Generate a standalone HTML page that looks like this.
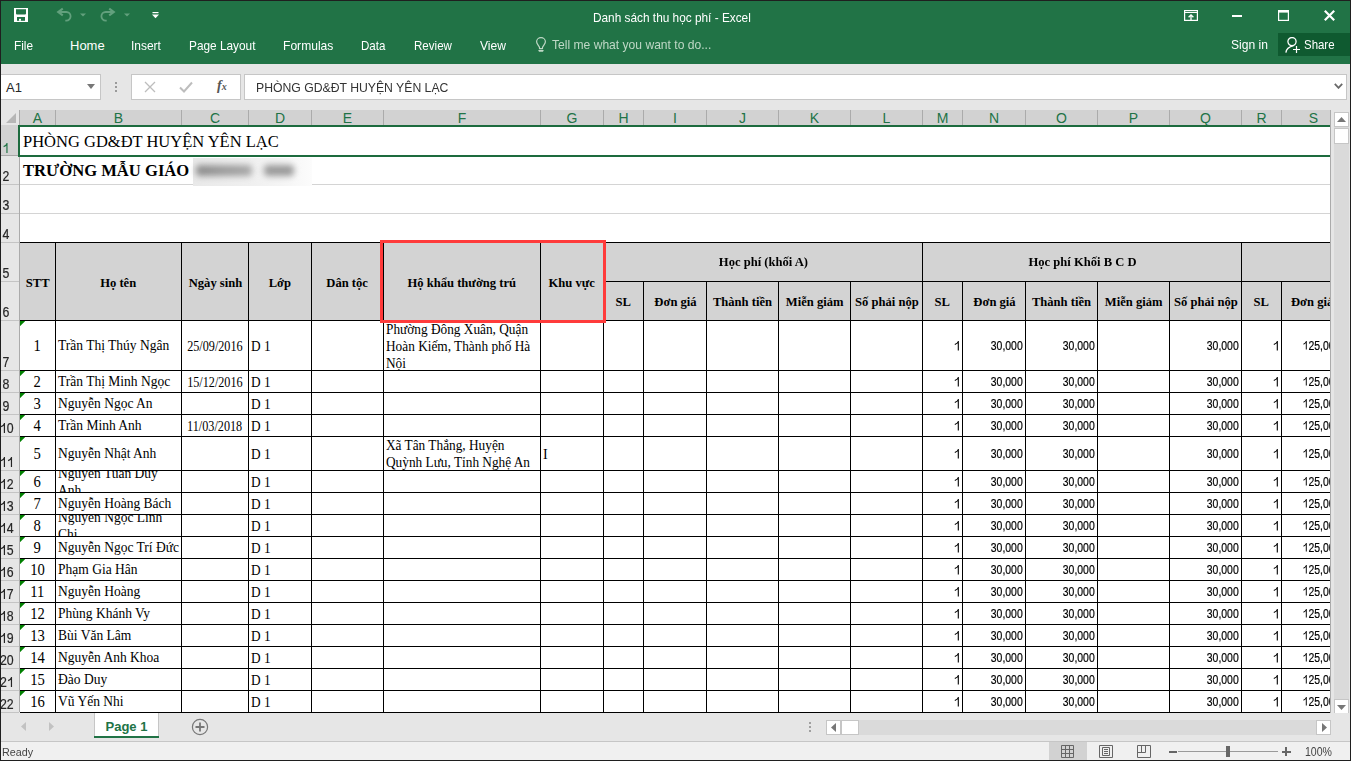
<!DOCTYPE html>
<html><head><meta charset="utf-8"><title>Excel</title><style>
html,body{margin:0;padding:0;width:1351px;height:761px;overflow:hidden;background:#e6e6e6}
#w{position:relative;width:1351px;height:761px;overflow:hidden}
#w>div,#w>svg{position:absolute}
.c{display:flex;box-sizing:border-box;white-space:nowrap;overflow:hidden}
.c span{display:block}
</style></head>
<body><div id="w">
<div style="left:0px;top:0px;width:1351px;height:761px;background:#e6e6e6"></div>
<div style="left:0px;top:0px;width:1351px;height:64px;background:#217346"></div>
<svg style="left:14px;top:8px" width="14" height="14" viewBox="0 0 14 14">
<path d="M0 0 H14 V14 H0 Z" fill="#fff"/>
<path d="M2 1.3 H12 V5.6 Q12 6.6 11 6.6 H3 Q2 6.6 2 5.6 Z" fill="#217346"/>
<rect x="3" y="9" width="8" height="3.8" fill="#217346"/>
<rect x="5" y="10.8" width="2" height="2" fill="#fff"/>
</svg>
<svg style="left:56px;top:7px" width="16" height="16" viewBox="0 0 16 16">
<path d="M6.8 1.6 L2.2 5 L6.8 8.4" fill="none" stroke="#62a07d" stroke-width="2.1" stroke-linejoin="miter"/>
<path d="M2.5 5 H10.3 A4.3 4.3 0 0 1 10.3 13.6 H9.3" fill="none" stroke="#62a07d" stroke-width="1.8"/>
</svg>
<svg style="left:80px;top:13px" width="6" height="4" viewBox="0 0 6 4"><path d="M0 0.5 H6 L3 3.5 Z" fill="#62a07d"/></svg>
<svg style="left:100px;top:7px" width="16" height="16" viewBox="0 0 16 16">
<path d="M9.2 1.6 L13.8 5 L9.2 8.4" fill="none" stroke="#62a07d" stroke-width="2.1" stroke-linejoin="miter"/>
<path d="M13.5 5 H5.7 A4.3 4.3 0 0 0 5.7 13.6 H6.7" fill="none" stroke="#62a07d" stroke-width="1.8"/>
</svg>
<svg style="left:124px;top:13px" width="6" height="4" viewBox="0 0 6 4"><path d="M0 0.5 H6 L3 3.5 Z" fill="#62a07d"/></svg>
<svg style="left:152px;top:12px" width="7" height="7" viewBox="0 0 7 7"><rect x="0.5" y="0" width="6" height="1.2" fill="#fff"/><path d="M0 2.6 H7 L3.5 6.2 Z" fill="#fff"/></svg>
<div style="left:593px;top:10px;font:13px 'Liberation Sans', sans-serif;color:#fff;white-space:nowrap;line-height:15px"><span style="display:inline-block;transform:scaleX(0.91);transform-origin:0 0">Danh sách thu học phí - Excel</span></div>
<svg style="left:1184px;top:10px" width="14" height="11" viewBox="0 0 14 11">
<rect x="0.6" y="0.6" width="12.8" height="9.8" fill="none" stroke="#fff" stroke-width="1.2"/>
<path d="M1 2.5 H13" stroke="#fff" stroke-width="1"/>
<path d="M7 10 V5 M4.6 7.2 L7 4.8 L9.4 7.2" fill="none" stroke="#fff" stroke-width="1.3"/>
</svg>
<div style="left:1232px;top:15px;width:10px;height:2px;background:#fff"></div>
<svg style="left:1278px;top:10px" width="11" height="11" viewBox="0 0 11 11">
<rect x="0.6" y="0.6" width="9.8" height="9.8" fill="none" stroke="#fff" stroke-width="1.2"/>
<rect x="0" y="1" width="11" height="1.6" fill="#fff"/>
</svg>
<svg style="left:1324px;top:10px" width="11" height="11" viewBox="0 0 11 11">
<path d="M0.8 0.8 L10.2 10.2 M10.2 0.8 L0.8 10.2" stroke="#fff" stroke-width="2.2"/>
</svg>
<div style="left:14px;top:38px;font:normal 13px 'Liberation Sans', sans-serif;color:#fff;white-space:nowrap;line-height:15px"><span style="display:inline-block;transform:scaleX(0.91);transform-origin:0 0">File</span></div>
<div style="left:70px;top:38px;font:normal 13px 'Liberation Sans', sans-serif;color:#fff;white-space:nowrap;line-height:15px"><span style="display:inline-block;transform:scaleX(1.0);transform-origin:0 0">Home</span></div>
<div style="left:131px;top:38px;font:normal 13px 'Liberation Sans', sans-serif;color:#fff;white-space:nowrap;line-height:15px"><span style="display:inline-block;transform:scaleX(0.92);transform-origin:0 0">Insert</span></div>
<div style="left:189px;top:38px;font:normal 13px 'Liberation Sans', sans-serif;color:#fff;white-space:nowrap;line-height:15px"><span style="display:inline-block;transform:scaleX(0.91);transform-origin:0 0">Page Layout</span></div>
<div style="left:283px;top:38px;font:normal 13px 'Liberation Sans', sans-serif;color:#fff;white-space:nowrap;line-height:15px"><span style="display:inline-block;transform:scaleX(0.93);transform-origin:0 0">Formulas</span></div>
<div style="left:361px;top:38px;font:normal 13px 'Liberation Sans', sans-serif;color:#fff;white-space:nowrap;line-height:15px"><span style="display:inline-block;transform:scaleX(0.89);transform-origin:0 0">Data</span></div>
<div style="left:414px;top:38px;font:normal 13px 'Liberation Sans', sans-serif;color:#fff;white-space:nowrap;line-height:15px"><span style="display:inline-block;transform:scaleX(0.89);transform-origin:0 0">Review</span></div>
<div style="left:480px;top:38px;font:normal 13px 'Liberation Sans', sans-serif;color:#fff;white-space:nowrap;line-height:15px"><span style="display:inline-block;transform:scaleX(0.93);transform-origin:0 0">View</span></div>
<svg style="left:535px;top:37px" width="12" height="16" viewBox="0 0 12 16">
<path d="M4.5 11.6 V10.6 C4.5 9 1.6 7.2 1.6 4.8 A4.4 4.1 0 0 1 10.4 4.8 C10.4 7.2 7.5 9 7.5 10.6 V11.6 Z" fill="none" stroke="#bfd8c6" stroke-width="1.2" stroke-linejoin="round"/>
<path d="M3.2 13 H8.8 L8 14.8 H4 Z" fill="#bfd8c6"/>
</svg>
<div style="left:552px;top:37px;font:normal 13px 'Liberation Sans', sans-serif;color:#bfd8c6;white-space:nowrap;line-height:15px"><span style="display:inline-block;transform:scaleX(0.93);transform-origin:0 0">Tell me what you want to do...</span></div>
<div style="left:1231px;top:37px;font:normal 13px 'Liberation Sans', sans-serif;color:#fff;white-space:nowrap;line-height:15px"><span style="display:inline-block;transform:scaleX(0.93);transform-origin:0 0">Sign in</span></div>
<div style="left:1278px;top:33px;width:72px;height:23px;background:#0f5a30"></div>
<svg style="left:1285px;top:37px" width="16" height="16" viewBox="0 0 16 16">
<circle cx="7" cy="4.6" r="4.1" fill="none" stroke="#fff" stroke-width="1.3"/>
<path d="M0.9 15.6 C1.2 11.6 4.2 9.6 8.6 8.6" fill="none" stroke="#fff" stroke-width="1.3"/>
<path d="M8 12.5 H15 M11.5 9 V16" stroke="#fff" stroke-width="1.2"/>
</svg>
<div style="left:1304px;top:37px;font:normal 13px 'Liberation Sans', sans-serif;color:#fff;white-space:nowrap;line-height:15px"><span style="display:inline-block;transform:scaleX(0.88);transform-origin:0 0">Share</span></div>
<div style="left:1px;top:74px;width:100px;height:26px;background:#fff;border:1px solid #c6c6c6;border-left:none;box-sizing:border-box"></div>
<div style="left:6px;top:80px;font:13px 'Liberation Sans', sans-serif;color:#262626;white-space:nowrap">A1</div>
<svg style="left:87px;top:84px" width="8" height="5" viewBox="0 0 8 5"><path d="M0 0 H8 L4 5 Z" fill="#777"/></svg>
<div style="left:115px;top:82px;width:2px;height:2px;background:#9a9a9a"></div>
<div style="left:115px;top:86px;width:2px;height:2px;background:#9a9a9a"></div>
<div style="left:115px;top:90px;width:2px;height:2px;background:#9a9a9a"></div>
<div style="left:131px;top:74px;width:110px;height:26px;background:#fff;border:1px solid #c6c6c6;box-sizing:border-box"></div>
<svg style="left:144px;top:81px" width="12" height="12" viewBox="0 0 12 12"><path d="M1 1 L11 11 M11 1 L1 11" stroke="#bdbdbd" stroke-width="1.3"/></svg>
<svg style="left:179px;top:81px" width="14" height="12" viewBox="0 0 14 12"><path d="M1 6.5 L5 10.5 L13 1.5" fill="none" stroke="#bdbdbd" stroke-width="2"/></svg>
<div style="left:217px;top:78px;font:bold 14px 'Liberation Serif', serif;color:#555;white-space:nowrap"><i>f</i><span style='font-size:10px;position:relative;top:0px'><i>x</i></span></div>
<div style="left:244px;top:74px;width:1103px;height:26px;background:#fff;border:1px solid #c6c6c6;box-sizing:border-box"></div>
<div style="left:256px;top:80px;font:normal 13px 'Liberation Sans', sans-serif;color:#333;white-space:nowrap;line-height:15px"><span style="display:inline-block;transform:scaleX(0.94);transform-origin:0 0">PHÒNG GD&amp;ĐT HUYỆN YÊN LẠC</span></div>
<svg style="left:1334px;top:83px" width="9" height="6" viewBox="0 0 9 6"><path d="M0.8 0.8 L4.5 4.8 L8.2 0.8" fill="none" stroke="#6a6a6a" stroke-width="1.8"/></svg>
<div style="left:20px;top:110px;width:1310px;height:15px;background:#d2d2d2"></div>
<svg style="left:6px;top:113px" width="10" height="10" viewBox="0 0 10 10"><path d="M10 0 V10 H0 Z" fill="#b6b6b6"/></svg>
<div style="left:19px;top:110px;width:1px;height:15px;background:#ababab"></div>
<div class="c" style="left:20px;top:110px;width:35px;height:15px;justify-content:center;align-items:center;padding:0 0px;font:14px 'Liberation Sans', sans-serif;color:#217346"><span style="transform:translateY(-0.5px) scaleX(1);transform-origin:50% 0">A</span></div>
<div style="left:55px;top:110px;width:1px;height:15px;background:#ababab"></div>
<div class="c" style="left:56px;top:110px;width:125px;height:15px;justify-content:center;align-items:center;padding:0 0px;font:14px 'Liberation Sans', sans-serif;color:#217346"><span style="transform:translateY(-0.5px) scaleX(1);transform-origin:50% 0">B</span></div>
<div style="left:181px;top:110px;width:1px;height:15px;background:#ababab"></div>
<div class="c" style="left:182px;top:110px;width:66px;height:15px;justify-content:center;align-items:center;padding:0 0px;font:14px 'Liberation Sans', sans-serif;color:#217346"><span style="transform:translateY(-0.5px) scaleX(1);transform-origin:50% 0">C</span></div>
<div style="left:248px;top:110px;width:1px;height:15px;background:#ababab"></div>
<div class="c" style="left:249px;top:110px;width:62px;height:15px;justify-content:center;align-items:center;padding:0 0px;font:14px 'Liberation Sans', sans-serif;color:#217346"><span style="transform:translateY(-0.5px) scaleX(1);transform-origin:50% 0">D</span></div>
<div style="left:311px;top:110px;width:1px;height:15px;background:#ababab"></div>
<div class="c" style="left:312px;top:110px;width:71px;height:15px;justify-content:center;align-items:center;padding:0 0px;font:14px 'Liberation Sans', sans-serif;color:#217346"><span style="transform:translateY(-0.5px) scaleX(1);transform-origin:50% 0">E</span></div>
<div style="left:383px;top:110px;width:1px;height:15px;background:#ababab"></div>
<div class="c" style="left:384px;top:110px;width:156px;height:15px;justify-content:center;align-items:center;padding:0 0px;font:14px 'Liberation Sans', sans-serif;color:#217346"><span style="transform:translateY(-0.5px) scaleX(1);transform-origin:50% 0">F</span></div>
<div style="left:540px;top:110px;width:1px;height:15px;background:#ababab"></div>
<div class="c" style="left:541px;top:110px;width:62px;height:15px;justify-content:center;align-items:center;padding:0 0px;font:14px 'Liberation Sans', sans-serif;color:#217346"><span style="transform:translateY(-0.5px) scaleX(1);transform-origin:50% 0">G</span></div>
<div style="left:603px;top:110px;width:1px;height:15px;background:#ababab"></div>
<div class="c" style="left:604px;top:110px;width:39px;height:15px;justify-content:center;align-items:center;padding:0 0px;font:14px 'Liberation Sans', sans-serif;color:#217346"><span style="transform:translateY(-0.5px) scaleX(1);transform-origin:50% 0">H</span></div>
<div style="left:643px;top:110px;width:1px;height:15px;background:#ababab"></div>
<div class="c" style="left:644px;top:110px;width:62px;height:15px;justify-content:center;align-items:center;padding:0 0px;font:14px 'Liberation Sans', sans-serif;color:#217346"><span style="transform:translateY(-0.5px) scaleX(1);transform-origin:50% 0">I</span></div>
<div style="left:706px;top:110px;width:1px;height:15px;background:#ababab"></div>
<div class="c" style="left:707px;top:110px;width:71px;height:15px;justify-content:center;align-items:center;padding:0 0px;font:14px 'Liberation Sans', sans-serif;color:#217346"><span style="transform:translateY(-0.5px) scaleX(1);transform-origin:50% 0">J</span></div>
<div style="left:778px;top:110px;width:1px;height:15px;background:#ababab"></div>
<div class="c" style="left:779px;top:110px;width:71px;height:15px;justify-content:center;align-items:center;padding:0 0px;font:14px 'Liberation Sans', sans-serif;color:#217346"><span style="transform:translateY(-0.5px) scaleX(1);transform-origin:50% 0">K</span></div>
<div style="left:850px;top:110px;width:1px;height:15px;background:#ababab"></div>
<div class="c" style="left:851px;top:110px;width:71px;height:15px;justify-content:center;align-items:center;padding:0 0px;font:14px 'Liberation Sans', sans-serif;color:#217346"><span style="transform:translateY(-0.5px) scaleX(1);transform-origin:50% 0">L</span></div>
<div style="left:922px;top:110px;width:1px;height:15px;background:#ababab"></div>
<div class="c" style="left:923px;top:110px;width:39px;height:15px;justify-content:center;align-items:center;padding:0 0px;font:14px 'Liberation Sans', sans-serif;color:#217346"><span style="transform:translateY(-0.5px) scaleX(1);transform-origin:50% 0">M</span></div>
<div style="left:962px;top:110px;width:1px;height:15px;background:#ababab"></div>
<div class="c" style="left:963px;top:110px;width:62px;height:15px;justify-content:center;align-items:center;padding:0 0px;font:14px 'Liberation Sans', sans-serif;color:#217346"><span style="transform:translateY(-0.5px) scaleX(1);transform-origin:50% 0">N</span></div>
<div style="left:1025px;top:110px;width:1px;height:15px;background:#ababab"></div>
<div class="c" style="left:1026px;top:110px;width:71px;height:15px;justify-content:center;align-items:center;padding:0 0px;font:14px 'Liberation Sans', sans-serif;color:#217346"><span style="transform:translateY(-0.5px) scaleX(1);transform-origin:50% 0">O</span></div>
<div style="left:1097px;top:110px;width:1px;height:15px;background:#ababab"></div>
<div class="c" style="left:1098px;top:110px;width:71px;height:15px;justify-content:center;align-items:center;padding:0 0px;font:14px 'Liberation Sans', sans-serif;color:#217346"><span style="transform:translateY(-0.5px) scaleX(1);transform-origin:50% 0">P</span></div>
<div style="left:1169px;top:110px;width:1px;height:15px;background:#ababab"></div>
<div class="c" style="left:1170px;top:110px;width:71px;height:15px;justify-content:center;align-items:center;padding:0 0px;font:14px 'Liberation Sans', sans-serif;color:#217346"><span style="transform:translateY(-0.5px) scaleX(1);transform-origin:50% 0">Q</span></div>
<div style="left:1241px;top:110px;width:1px;height:15px;background:#ababab"></div>
<div class="c" style="left:1242px;top:110px;width:39px;height:15px;justify-content:center;align-items:center;padding:0 0px;font:14px 'Liberation Sans', sans-serif;color:#217346"><span style="transform:translateY(-0.5px) scaleX(1);transform-origin:50% 0">R</span></div>
<div style="left:1281px;top:110px;width:1px;height:15px;background:#ababab"></div>
<div class="c" style="left:1282px;top:110px;width:48px;height:15px;overflow:hidden;font:14px 'Liberation Sans', sans-serif;color:#217346"><div class="c" style="position:absolute;left:0;top:0;width:63px;height:15px;justify-content:center;align-items:center"><span style="transform:translateY(-0.5px)">S</span></div></div>
<div style="left:1px;top:125px;width:18px;height:587px;background:#e6e6e6"></div>
<div style="left:1px;top:125px;width:18px;height:31px;background:#d2d2d2"></div>
<div style="left:19px;top:125px;width:1px;height:587px;background:#ababab"></div>
<div style="left:1px;top:155px;width:18px;height:1px;background:#a8a8a8"></div>
<div class="c" style="left:-13.7px;top:126px;width:40px;height:30px;align-items:flex-end;justify-content:center;padding:0;font:14px 'Liberation Sans', sans-serif;color:#217346;-webkit-text-stroke:0.2px #217346;clip-path:inset(0 7.3px 0 14.7px)"><span style="transform:scaleX(0.88);transform-origin:50% 0"><svg width="7.8" height="10" viewBox="0 0 7.8 10" style="vertical-align:baseline;display:inline-block"><path d="M5.1 0 V10 M5.1 0.7 Q4.2 2.6 1.3 3.7" fill="none" stroke="#217346" stroke-width="1.35"/></svg></span></div>
<div style="left:1px;top:184px;width:18px;height:1px;background:#c4c4c4"></div>
<div class="c" style="left:-13.7px;top:157px;width:40px;height:27px;align-items:flex-end;justify-content:center;padding:0;font:14px 'Liberation Sans', sans-serif;color:#262626;-webkit-text-stroke:0.2px #262626;clip-path:inset(0 7.3px 0 14.7px)"><span style="transform:scaleX(0.88);transform-origin:50% 0">2</span></div>
<div style="left:1px;top:213px;width:18px;height:1px;background:#c4c4c4"></div>
<div class="c" style="left:-13.7px;top:185px;width:40px;height:28px;align-items:flex-end;justify-content:center;padding:0;font:14px 'Liberation Sans', sans-serif;color:#262626;-webkit-text-stroke:0.2px #262626;clip-path:inset(0 7.3px 0 14.7px)"><span style="transform:scaleX(0.88);transform-origin:50% 0">3</span></div>
<div style="left:1px;top:242px;width:18px;height:1px;background:#c4c4c4"></div>
<div class="c" style="left:-13.7px;top:214px;width:40px;height:28px;align-items:flex-end;justify-content:center;padding:0;font:14px 'Liberation Sans', sans-serif;color:#262626;-webkit-text-stroke:0.2px #262626;clip-path:inset(0 7.3px 0 14.7px)"><span style="transform:scaleX(0.88);transform-origin:50% 0">4</span></div>
<div style="left:1px;top:281px;width:18px;height:1px;background:#c4c4c4"></div>
<div class="c" style="left:-13.7px;top:243px;width:40px;height:38px;align-items:flex-end;justify-content:center;padding:0;font:14px 'Liberation Sans', sans-serif;color:#262626;-webkit-text-stroke:0.2px #262626;clip-path:inset(0 7.3px 0 14.7px)"><span style="transform:scaleX(0.88);transform-origin:50% 0">5</span></div>
<div style="left:1px;top:320px;width:18px;height:1px;background:#c4c4c4"></div>
<div class="c" style="left:-13.7px;top:282px;width:40px;height:38px;align-items:flex-end;justify-content:center;padding:0;font:14px 'Liberation Sans', sans-serif;color:#262626;-webkit-text-stroke:0.2px #262626;clip-path:inset(0 7.3px 0 14.7px)"><span style="transform:scaleX(0.88);transform-origin:50% 0">6</span></div>
<div style="left:1px;top:370px;width:18px;height:1px;background:#c4c4c4"></div>
<div class="c" style="left:-13.7px;top:321px;width:40px;height:49px;align-items:flex-end;justify-content:center;padding:0;font:14px 'Liberation Sans', sans-serif;color:#262626;-webkit-text-stroke:0.2px #262626;clip-path:inset(0 7.3px 0 14.7px)"><span style="transform:scaleX(0.88);transform-origin:50% 0">7</span></div>
<div style="left:1px;top:392px;width:18px;height:1px;background:#c4c4c4"></div>
<div class="c" style="left:-13.7px;top:371px;width:40px;height:21px;align-items:flex-end;justify-content:center;padding:0;font:14px 'Liberation Sans', sans-serif;color:#262626;-webkit-text-stroke:0.2px #262626;clip-path:inset(0 7.3px 0 14.7px)"><span style="transform:scaleX(0.88);transform-origin:50% 0">8</span></div>
<div style="left:1px;top:414px;width:18px;height:1px;background:#c4c4c4"></div>
<div class="c" style="left:-13.7px;top:393px;width:40px;height:21px;align-items:flex-end;justify-content:center;padding:0;font:14px 'Liberation Sans', sans-serif;color:#262626;-webkit-text-stroke:0.2px #262626;clip-path:inset(0 7.3px 0 14.7px)"><span style="transform:scaleX(0.88);transform-origin:50% 0">9</span></div>
<div style="left:1px;top:436px;width:18px;height:1px;background:#c4c4c4"></div>
<div class="c" style="left:-13.7px;top:415px;width:40px;height:21px;align-items:flex-end;justify-content:center;padding:0;font:14px 'Liberation Sans', sans-serif;color:#262626;-webkit-text-stroke:0.2px #262626;clip-path:inset(0 7.3px 0 14.7px)"><span style="transform:scaleX(0.88);transform-origin:50% 0"><svg width="7.8" height="10" viewBox="0 0 7.8 10" style="vertical-align:baseline;display:inline-block"><path d="M5.1 0 V10 M5.1 0.7 Q4.2 2.6 1.3 3.7" fill="none" stroke="#262626" stroke-width="1.35"/></svg>0</span></div>
<div style="left:1px;top:470px;width:18px;height:1px;background:#c4c4c4"></div>
<div class="c" style="left:-13.7px;top:437px;width:40px;height:33px;align-items:flex-end;justify-content:center;padding:0;font:14px 'Liberation Sans', sans-serif;color:#262626;-webkit-text-stroke:0.2px #262626;clip-path:inset(0 7.3px 0 14.7px)"><span style="transform:scaleX(0.88);transform-origin:50% 0"><svg width="7.8" height="10" viewBox="0 0 7.8 10" style="vertical-align:baseline;display:inline-block"><path d="M5.1 0 V10 M5.1 0.7 Q4.2 2.6 1.3 3.7" fill="none" stroke="#262626" stroke-width="1.35"/></svg><svg width="7.8" height="10" viewBox="0 0 7.8 10" style="vertical-align:baseline;display:inline-block"><path d="M5.1 0 V10 M5.1 0.7 Q4.2 2.6 1.3 3.7" fill="none" stroke="#262626" stroke-width="1.35"/></svg></span></div>
<div style="left:1px;top:492px;width:18px;height:1px;background:#c4c4c4"></div>
<div class="c" style="left:-13.7px;top:471px;width:40px;height:21px;align-items:flex-end;justify-content:center;padding:0;font:14px 'Liberation Sans', sans-serif;color:#262626;-webkit-text-stroke:0.2px #262626;clip-path:inset(0 7.3px 0 14.7px)"><span style="transform:scaleX(0.88);transform-origin:50% 0"><svg width="7.8" height="10" viewBox="0 0 7.8 10" style="vertical-align:baseline;display:inline-block"><path d="M5.1 0 V10 M5.1 0.7 Q4.2 2.6 1.3 3.7" fill="none" stroke="#262626" stroke-width="1.35"/></svg>2</span></div>
<div style="left:1px;top:514px;width:18px;height:1px;background:#c4c4c4"></div>
<div class="c" style="left:-13.7px;top:493px;width:40px;height:21px;align-items:flex-end;justify-content:center;padding:0;font:14px 'Liberation Sans', sans-serif;color:#262626;-webkit-text-stroke:0.2px #262626;clip-path:inset(0 7.3px 0 14.7px)"><span style="transform:scaleX(0.88);transform-origin:50% 0"><svg width="7.8" height="10" viewBox="0 0 7.8 10" style="vertical-align:baseline;display:inline-block"><path d="M5.1 0 V10 M5.1 0.7 Q4.2 2.6 1.3 3.7" fill="none" stroke="#262626" stroke-width="1.35"/></svg>3</span></div>
<div style="left:1px;top:536px;width:18px;height:1px;background:#c4c4c4"></div>
<div class="c" style="left:-13.7px;top:515px;width:40px;height:21px;align-items:flex-end;justify-content:center;padding:0;font:14px 'Liberation Sans', sans-serif;color:#262626;-webkit-text-stroke:0.2px #262626;clip-path:inset(0 7.3px 0 14.7px)"><span style="transform:scaleX(0.88);transform-origin:50% 0"><svg width="7.8" height="10" viewBox="0 0 7.8 10" style="vertical-align:baseline;display:inline-block"><path d="M5.1 0 V10 M5.1 0.7 Q4.2 2.6 1.3 3.7" fill="none" stroke="#262626" stroke-width="1.35"/></svg>4</span></div>
<div style="left:1px;top:558px;width:18px;height:1px;background:#c4c4c4"></div>
<div class="c" style="left:-13.7px;top:537px;width:40px;height:21px;align-items:flex-end;justify-content:center;padding:0;font:14px 'Liberation Sans', sans-serif;color:#262626;-webkit-text-stroke:0.2px #262626;clip-path:inset(0 7.3px 0 14.7px)"><span style="transform:scaleX(0.88);transform-origin:50% 0"><svg width="7.8" height="10" viewBox="0 0 7.8 10" style="vertical-align:baseline;display:inline-block"><path d="M5.1 0 V10 M5.1 0.7 Q4.2 2.6 1.3 3.7" fill="none" stroke="#262626" stroke-width="1.35"/></svg>5</span></div>
<div style="left:1px;top:580px;width:18px;height:1px;background:#c4c4c4"></div>
<div class="c" style="left:-13.7px;top:559px;width:40px;height:21px;align-items:flex-end;justify-content:center;padding:0;font:14px 'Liberation Sans', sans-serif;color:#262626;-webkit-text-stroke:0.2px #262626;clip-path:inset(0 7.3px 0 14.7px)"><span style="transform:scaleX(0.88);transform-origin:50% 0"><svg width="7.8" height="10" viewBox="0 0 7.8 10" style="vertical-align:baseline;display:inline-block"><path d="M5.1 0 V10 M5.1 0.7 Q4.2 2.6 1.3 3.7" fill="none" stroke="#262626" stroke-width="1.35"/></svg>6</span></div>
<div style="left:1px;top:602px;width:18px;height:1px;background:#c4c4c4"></div>
<div class="c" style="left:-13.7px;top:581px;width:40px;height:21px;align-items:flex-end;justify-content:center;padding:0;font:14px 'Liberation Sans', sans-serif;color:#262626;-webkit-text-stroke:0.2px #262626;clip-path:inset(0 7.3px 0 14.7px)"><span style="transform:scaleX(0.88);transform-origin:50% 0"><svg width="7.8" height="10" viewBox="0 0 7.8 10" style="vertical-align:baseline;display:inline-block"><path d="M5.1 0 V10 M5.1 0.7 Q4.2 2.6 1.3 3.7" fill="none" stroke="#262626" stroke-width="1.35"/></svg>7</span></div>
<div style="left:1px;top:624px;width:18px;height:1px;background:#c4c4c4"></div>
<div class="c" style="left:-13.7px;top:603px;width:40px;height:21px;align-items:flex-end;justify-content:center;padding:0;font:14px 'Liberation Sans', sans-serif;color:#262626;-webkit-text-stroke:0.2px #262626;clip-path:inset(0 7.3px 0 14.7px)"><span style="transform:scaleX(0.88);transform-origin:50% 0"><svg width="7.8" height="10" viewBox="0 0 7.8 10" style="vertical-align:baseline;display:inline-block"><path d="M5.1 0 V10 M5.1 0.7 Q4.2 2.6 1.3 3.7" fill="none" stroke="#262626" stroke-width="1.35"/></svg>8</span></div>
<div style="left:1px;top:646px;width:18px;height:1px;background:#c4c4c4"></div>
<div class="c" style="left:-13.7px;top:625px;width:40px;height:21px;align-items:flex-end;justify-content:center;padding:0;font:14px 'Liberation Sans', sans-serif;color:#262626;-webkit-text-stroke:0.2px #262626;clip-path:inset(0 7.3px 0 14.7px)"><span style="transform:scaleX(0.88);transform-origin:50% 0"><svg width="7.8" height="10" viewBox="0 0 7.8 10" style="vertical-align:baseline;display:inline-block"><path d="M5.1 0 V10 M5.1 0.7 Q4.2 2.6 1.3 3.7" fill="none" stroke="#262626" stroke-width="1.35"/></svg>9</span></div>
<div style="left:1px;top:668px;width:18px;height:1px;background:#c4c4c4"></div>
<div class="c" style="left:-13.7px;top:647px;width:40px;height:21px;align-items:flex-end;justify-content:center;padding:0;font:14px 'Liberation Sans', sans-serif;color:#262626;-webkit-text-stroke:0.2px #262626;clip-path:inset(0 7.3px 0 14.7px)"><span style="transform:scaleX(0.88);transform-origin:50% 0">20</span></div>
<div style="left:1px;top:690px;width:18px;height:1px;background:#c4c4c4"></div>
<div class="c" style="left:-13.7px;top:669px;width:40px;height:21px;align-items:flex-end;justify-content:center;padding:0;font:14px 'Liberation Sans', sans-serif;color:#262626;-webkit-text-stroke:0.2px #262626;clip-path:inset(0 7.3px 0 14.7px)"><span style="transform:scaleX(0.88);transform-origin:50% 0">2<svg width="7.8" height="10" viewBox="0 0 7.8 10" style="vertical-align:baseline;display:inline-block"><path d="M5.1 0 V10 M5.1 0.7 Q4.2 2.6 1.3 3.7" fill="none" stroke="#262626" stroke-width="1.35"/></svg></span></div>
<div style="left:1px;top:712px;width:18px;height:1px;background:#c4c4c4"></div>
<div class="c" style="left:-13.7px;top:691px;width:40px;height:21px;align-items:flex-end;justify-content:center;padding:0;font:14px 'Liberation Sans', sans-serif;color:#262626;-webkit-text-stroke:0.2px #262626;clip-path:inset(0 7.3px 0 14.7px)"><span style="transform:scaleX(0.88);transform-origin:50% 0">22</span></div>
<div style="left:20px;top:125px;width:1310px;height:587px;background:#fff"></div>
<div style="left:20px;top:184px;width:1310px;height:1px;background:#d4d4d4"></div>
<div style="left:20px;top:213px;width:1310px;height:1px;background:#d4d4d4"></div>
<div style="left:20px;top:242px;width:1310px;height:78px;background:#d3d3d3"></div>
<div style="left:20px;top:242px;width:1310px;height:1px;background:#000"></div>
<div style="left:603px;top:281px;width:727px;height:1px;background:#000"></div>
<div style="left:20px;top:320px;width:1310px;height:1px;background:#000"></div>
<div style="left:20px;top:370px;width:1310px;height:1px;background:#000"></div>
<div style="left:20px;top:392px;width:1310px;height:1px;background:#000"></div>
<div style="left:20px;top:414px;width:1310px;height:1px;background:#000"></div>
<div style="left:20px;top:436px;width:1310px;height:1px;background:#000"></div>
<div style="left:20px;top:470px;width:1310px;height:1px;background:#000"></div>
<div style="left:20px;top:492px;width:1310px;height:1px;background:#000"></div>
<div style="left:20px;top:514px;width:1310px;height:1px;background:#000"></div>
<div style="left:20px;top:536px;width:1310px;height:1px;background:#000"></div>
<div style="left:20px;top:558px;width:1310px;height:1px;background:#000"></div>
<div style="left:20px;top:580px;width:1310px;height:1px;background:#000"></div>
<div style="left:20px;top:602px;width:1310px;height:1px;background:#000"></div>
<div style="left:20px;top:624px;width:1310px;height:1px;background:#000"></div>
<div style="left:20px;top:646px;width:1310px;height:1px;background:#000"></div>
<div style="left:20px;top:668px;width:1310px;height:1px;background:#000"></div>
<div style="left:20px;top:690px;width:1310px;height:1px;background:#000"></div>
<div style="left:20px;top:712px;width:1310px;height:1px;background:#000"></div>
<div style="left:55px;top:242px;width:1px;height:470px;background:#000"></div>
<div style="left:181px;top:242px;width:1px;height:470px;background:#000"></div>
<div style="left:248px;top:242px;width:1px;height:470px;background:#000"></div>
<div style="left:311px;top:242px;width:1px;height:470px;background:#000"></div>
<div style="left:383px;top:242px;width:1px;height:470px;background:#000"></div>
<div style="left:540px;top:242px;width:1px;height:470px;background:#000"></div>
<div style="left:603px;top:242px;width:1px;height:470px;background:#000"></div>
<div style="left:643px;top:281px;width:1px;height:431px;background:#000"></div>
<div style="left:706px;top:281px;width:1px;height:431px;background:#000"></div>
<div style="left:778px;top:281px;width:1px;height:431px;background:#000"></div>
<div style="left:850px;top:281px;width:1px;height:431px;background:#000"></div>
<div style="left:922px;top:242px;width:1px;height:470px;background:#000"></div>
<div style="left:962px;top:281px;width:1px;height:431px;background:#000"></div>
<div style="left:1025px;top:281px;width:1px;height:431px;background:#000"></div>
<div style="left:1097px;top:281px;width:1px;height:431px;background:#000"></div>
<div style="left:1169px;top:281px;width:1px;height:431px;background:#000"></div>
<div style="left:1241px;top:242px;width:1px;height:470px;background:#000"></div>
<div style="left:1281px;top:281px;width:1px;height:431px;background:#000"></div>
<div class="c" style="left:20px;top:243px;width:35px;height:77px;justify-content:center;align-items:center;padding:0 0px;font:bold 13.4px 'Liberation Serif', serif;color:#000"><span style="transform:translateY(1px) scaleX(0.94);transform-origin:50% 0">STT</span></div>
<div class="c" style="left:56px;top:243px;width:125px;height:77px;justify-content:center;align-items:center;padding:0 0px;font:bold 13.4px 'Liberation Serif', serif;color:#000"><span style="transform:translateY(1px) scaleX(0.94);transform-origin:50% 0">Họ tên</span></div>
<div class="c" style="left:182px;top:243px;width:66px;height:77px;justify-content:center;align-items:center;padding:0 0px;font:bold 13.4px 'Liberation Serif', serif;color:#000"><span style="transform:translateY(1px) scaleX(0.94);transform-origin:50% 0">Ngày sinh</span></div>
<div class="c" style="left:249px;top:243px;width:62px;height:77px;justify-content:center;align-items:center;padding:0 0px;font:bold 13.4px 'Liberation Serif', serif;color:#000"><span style="transform:translateY(1px) scaleX(0.94);transform-origin:50% 0">Lớp</span></div>
<div class="c" style="left:312px;top:243px;width:71px;height:77px;justify-content:center;align-items:center;padding:0 0px;font:bold 13.4px 'Liberation Serif', serif;color:#000"><span style="transform:translateY(1px) scaleX(0.94);transform-origin:50% 0">Dân tộc</span></div>
<div class="c" style="left:384px;top:243px;width:156px;height:77px;justify-content:center;align-items:center;padding:0 0px;font:bold 13.4px 'Liberation Serif', serif;color:#000"><span style="transform:translateY(1px) scaleX(0.94);transform-origin:50% 0">Hộ khẩu thường trú</span></div>
<div class="c" style="left:541px;top:243px;width:62px;height:77px;justify-content:center;align-items:center;padding:0 0px;font:bold 13.4px 'Liberation Serif', serif;color:#000"><span style="transform:translateY(1px) scaleX(0.94);transform-origin:50% 0">Khu vực</span></div>
<div class="c" style="left:604px;top:243px;width:318px;height:38px;justify-content:center;align-items:center;padding:0 0px;font:bold 13.4px 'Liberation Serif', serif;color:#000"><span style="transform:translateY(0px) scaleX(0.94);transform-origin:50% 0">Học phí (khối A)</span></div>
<div class="c" style="left:923px;top:243px;width:318px;height:38px;justify-content:center;align-items:center;padding:0 0px;font:bold 13.4px 'Liberation Serif', serif;color:#000"><span style="transform:translateY(0px) scaleX(0.94);transform-origin:50% 0">Học phí Khối B C D</span></div>
<div class="c" style="left:604px;top:282px;width:39px;height:38px;justify-content:center;align-items:center;padding:0 0px;font:bold 13.4px 'Liberation Serif', serif;color:#000"><span style="transform:translateY(1px) scaleX(0.94);transform-origin:50% 0">SL</span></div>
<div class="c" style="left:644px;top:282px;width:62px;height:38px;justify-content:center;align-items:center;padding:0 0px;font:bold 13.4px 'Liberation Serif', serif;color:#000"><span style="transform:translateY(1px) scaleX(0.94);transform-origin:50% 0">Đơn giá</span></div>
<div class="c" style="left:707px;top:282px;width:71px;height:38px;justify-content:center;align-items:center;padding:0 0px;font:bold 13.4px 'Liberation Serif', serif;color:#000"><span style="transform:translateY(1px) scaleX(0.94);transform-origin:50% 0">Thành tiền</span></div>
<div class="c" style="left:779px;top:282px;width:71px;height:38px;justify-content:center;align-items:center;padding:0 0px;font:bold 13.4px 'Liberation Serif', serif;color:#000"><span style="transform:translateY(1px) scaleX(0.94);transform-origin:50% 0">Miễn giảm</span></div>
<div class="c" style="left:851px;top:282px;width:71px;height:38px;justify-content:center;align-items:center;padding:0 0px;font:bold 13.4px 'Liberation Serif', serif;color:#000"><span style="transform:translateY(1px) scaleX(0.94);transform-origin:50% 0">Số phải nộp</span></div>
<div class="c" style="left:923px;top:282px;width:39px;height:38px;justify-content:center;align-items:center;padding:0 0px;font:bold 13.4px 'Liberation Serif', serif;color:#000"><span style="transform:translateY(1px) scaleX(0.94);transform-origin:50% 0">SL</span></div>
<div class="c" style="left:963px;top:282px;width:62px;height:38px;justify-content:center;align-items:center;padding:0 0px;font:bold 13.4px 'Liberation Serif', serif;color:#000"><span style="transform:translateY(1px) scaleX(0.94);transform-origin:50% 0">Đơn giá</span></div>
<div class="c" style="left:1026px;top:282px;width:71px;height:38px;justify-content:center;align-items:center;padding:0 0px;font:bold 13.4px 'Liberation Serif', serif;color:#000"><span style="transform:translateY(1px) scaleX(0.94);transform-origin:50% 0">Thành tiền</span></div>
<div class="c" style="left:1098px;top:282px;width:71px;height:38px;justify-content:center;align-items:center;padding:0 0px;font:bold 13.4px 'Liberation Serif', serif;color:#000"><span style="transform:translateY(1px) scaleX(0.94);transform-origin:50% 0">Miễn giảm</span></div>
<div class="c" style="left:1170px;top:282px;width:71px;height:38px;justify-content:center;align-items:center;padding:0 0px;font:bold 13.4px 'Liberation Serif', serif;color:#000"><span style="transform:translateY(1px) scaleX(0.94);transform-origin:50% 0">Số phải nộp</span></div>
<div class="c" style="left:1242px;top:282px;width:39px;height:38px;justify-content:center;align-items:center;padding:0 0px;font:bold 13.4px 'Liberation Serif', serif;color:#000"><span style="transform:translateY(1px) scaleX(0.94);transform-origin:50% 0">SL</span></div>
<div class="c" style="left:1282px;top:282px;width:48px;height:38px;justify-content:flex-start;align-items:center;padding-left:9px;font:bold 13.4px 'Liberation Serif', serif;color:#000"><span style="transform:translateY(1px) scaleX(0.94);transform-origin:0 0">Đơn giá</span></div>
<div style="left:23px;top:132px;font:16.5px 'Liberation Serif', serif;color:#000;white-space:nowrap">PHÒNG GD&amp;ĐT HUYỆN YÊN LẠC</div>
<div style="left:23px;top:161px;font:bold 16.6px 'Liberation Serif', serif;color:#000;white-space:nowrap">TRƯỜNG MẪU GIÁO</div>
<div style="left:193px;top:158px;width:119px;height:28px;background:linear-gradient(90deg,#e9e9e9 0%,#efefef 45%,#f5f5f5 75%,#fcfcfc 100%)"></div>
<div style="left:196px;top:165px;width:56px;height:11px;background:linear-gradient(90deg,#8c8c8c,#9c9c9c 50%,#a8a8a8);border-radius:4px;filter:blur(3.2px)"></div>
<div style="left:264px;top:165px;width:30px;height:11px;background:#9a9a9a;border-radius:4px;filter:blur(3.2px)"></div>
<svg style="left:20px;top:321px" width="5" height="5" viewBox="0 0 5 5"><path d="M0 0 H5.2 L0 5.2 Z" fill="#008000"/></svg>
<div class="c" style="left:20px;top:321px;width:35px;height:49px;justify-content:center;align-items:center;padding:0 0px;font:17px 'Liberation Serif', serif;color:#000"><span style="transform:translateY(0.3px) scaleX(0.86);transform-origin:50% 0">1</span></div>
<div class="c" style="left:56px;top:321px;width:125px;height:49px;justify-content:flex-start;align-items:center;padding:0 2px;font:14px 'Liberation Serif', serif;color:#000;line-height:16.8px;overflow:hidden"><span style="transform:translateY(1px) scaleX(0.965);transform-origin:0 0">Trần Thị Thúy Ngân</span></div>
<div class="c" style="left:182px;top:321px;width:66px;height:49px;justify-content:center;align-items:center;padding:0 0px;font:14px 'Liberation Serif', serif;color:#000"><span style="transform:translateY(1px) scaleX(0.87);transform-origin:50% 0">25/09/2016</span></div>
<div class="c" style="left:249px;top:321px;width:62px;height:49px;justify-content:flex-start;align-items:center;padding:0 2px;font:14px 'Liberation Serif', serif;color:#000"><span style="transform:translateY(1px) scaleX(0.95);transform-origin:0 0">D 1</span></div>
<svg style="left:954px;top:340.5px" width="6" height="10" viewBox="0 0 6 10"><path d="M4.3 0 V9.6 M4.3 0.6 Q3.6 2.4 0.8 3.6" fill="none" stroke="#000" stroke-width="1.1"/></svg>
<div class="c" style="left:963px;top:321px;width:62px;height:49px;justify-content:flex-end;align-items:center;padding:0 2px;font:12px 'Liberation Sans', sans-serif;color:#000;-webkit-text-stroke:0.2px #000"><span style="transform:translateY(0px) scaleX(0.87);transform-origin:100% 0">30,000</span></div>
<div class="c" style="left:1026px;top:321px;width:71px;height:49px;justify-content:flex-end;align-items:center;padding:0 2px;font:12px 'Liberation Sans', sans-serif;color:#000;-webkit-text-stroke:0.2px #000"><span style="transform:translateY(0px) scaleX(0.87);transform-origin:100% 0">30,000</span></div>
<div class="c" style="left:1170px;top:321px;width:71px;height:49px;justify-content:flex-end;align-items:center;padding:0 2px;font:12px 'Liberation Sans', sans-serif;color:#000;-webkit-text-stroke:0.2px #000"><span style="transform:translateY(0px) scaleX(0.87);transform-origin:100% 0">30,000</span></div>
<svg style="left:1273px;top:340.5px" width="6" height="10" viewBox="0 0 6 10"><path d="M4.3 0 V9.6 M4.3 0.6 Q3.6 2.4 0.8 3.6" fill="none" stroke="#000" stroke-width="1.1"/></svg>
<div class="c" style="left:1282px;top:321px;width:48px;height:49px;overflow:hidden;font:12px 'Liberation Sans', sans-serif;color:#000;-webkit-text-stroke:0.2px #000"><div class="c" style="position:absolute;left:0;top:0;width:60px;height:49px;justify-content:flex-end;align-items:center;padding-right:2px"><span style="transform:scaleX(0.87);transform-origin:100% 0"><svg width="6.67" height="8.6" viewBox="0 0 6.67 8.6" style="vertical-align:baseline;display:inline-block"><path d="M4.2 0 V8.6 M4.2 0.6 Q3.5 2.2 1 3.2" fill="none" stroke="#000" stroke-width="1.1"/></svg>25,000</span></div></div>
<svg style="left:20px;top:371px" width="5" height="5" viewBox="0 0 5 5"><path d="M0 0 H5.2 L0 5.2 Z" fill="#008000"/></svg>
<div class="c" style="left:20px;top:371px;width:35px;height:21px;justify-content:center;align-items:center;padding:0 0px;font:17px 'Liberation Serif', serif;color:#000"><span style="transform:translateY(0.3px) scaleX(0.86);transform-origin:50% 0">2</span></div>
<div class="c" style="left:56px;top:371px;width:125px;height:21px;justify-content:flex-start;align-items:center;padding:0 2px;font:14px 'Liberation Serif', serif;color:#000;line-height:16.8px;overflow:hidden"><span style="transform:translateY(1px) scaleX(0.965);transform-origin:0 0">Trần Thị Minh Ngọc</span></div>
<div class="c" style="left:182px;top:371px;width:66px;height:21px;justify-content:center;align-items:center;padding:0 0px;font:14px 'Liberation Serif', serif;color:#000"><span style="transform:translateY(1px) scaleX(0.87);transform-origin:50% 0">15/12/2016</span></div>
<div class="c" style="left:249px;top:371px;width:62px;height:21px;justify-content:flex-start;align-items:center;padding:0 2px;font:14px 'Liberation Serif', serif;color:#000"><span style="transform:translateY(1px) scaleX(0.95);transform-origin:0 0">D 1</span></div>
<svg style="left:954px;top:376.5px" width="6" height="10" viewBox="0 0 6 10"><path d="M4.3 0 V9.6 M4.3 0.6 Q3.6 2.4 0.8 3.6" fill="none" stroke="#000" stroke-width="1.1"/></svg>
<div class="c" style="left:963px;top:371px;width:62px;height:21px;justify-content:flex-end;align-items:center;padding:0 2px;font:12px 'Liberation Sans', sans-serif;color:#000;-webkit-text-stroke:0.2px #000"><span style="transform:translateY(0px) scaleX(0.87);transform-origin:100% 0">30,000</span></div>
<div class="c" style="left:1026px;top:371px;width:71px;height:21px;justify-content:flex-end;align-items:center;padding:0 2px;font:12px 'Liberation Sans', sans-serif;color:#000;-webkit-text-stroke:0.2px #000"><span style="transform:translateY(0px) scaleX(0.87);transform-origin:100% 0">30,000</span></div>
<div class="c" style="left:1170px;top:371px;width:71px;height:21px;justify-content:flex-end;align-items:center;padding:0 2px;font:12px 'Liberation Sans', sans-serif;color:#000;-webkit-text-stroke:0.2px #000"><span style="transform:translateY(0px) scaleX(0.87);transform-origin:100% 0">30,000</span></div>
<svg style="left:1273px;top:376.5px" width="6" height="10" viewBox="0 0 6 10"><path d="M4.3 0 V9.6 M4.3 0.6 Q3.6 2.4 0.8 3.6" fill="none" stroke="#000" stroke-width="1.1"/></svg>
<div class="c" style="left:1282px;top:371px;width:48px;height:21px;overflow:hidden;font:12px 'Liberation Sans', sans-serif;color:#000;-webkit-text-stroke:0.2px #000"><div class="c" style="position:absolute;left:0;top:0;width:60px;height:21px;justify-content:flex-end;align-items:center;padding-right:2px"><span style="transform:scaleX(0.87);transform-origin:100% 0"><svg width="6.67" height="8.6" viewBox="0 0 6.67 8.6" style="vertical-align:baseline;display:inline-block"><path d="M4.2 0 V8.6 M4.2 0.6 Q3.5 2.2 1 3.2" fill="none" stroke="#000" stroke-width="1.1"/></svg>25,000</span></div></div>
<svg style="left:20px;top:393px" width="5" height="5" viewBox="0 0 5 5"><path d="M0 0 H5.2 L0 5.2 Z" fill="#008000"/></svg>
<div class="c" style="left:20px;top:393px;width:35px;height:21px;justify-content:center;align-items:center;padding:0 0px;font:17px 'Liberation Serif', serif;color:#000"><span style="transform:translateY(0.3px) scaleX(0.86);transform-origin:50% 0">3</span></div>
<div class="c" style="left:56px;top:393px;width:125px;height:21px;justify-content:flex-start;align-items:center;padding:0 2px;font:14px 'Liberation Serif', serif;color:#000;line-height:16.8px;overflow:hidden"><span style="transform:translateY(1px) scaleX(0.965);transform-origin:0 0">Nguyễn Ngọc An</span></div>
<div class="c" style="left:249px;top:393px;width:62px;height:21px;justify-content:flex-start;align-items:center;padding:0 2px;font:14px 'Liberation Serif', serif;color:#000"><span style="transform:translateY(1px) scaleX(0.95);transform-origin:0 0">D 1</span></div>
<svg style="left:954px;top:398.5px" width="6" height="10" viewBox="0 0 6 10"><path d="M4.3 0 V9.6 M4.3 0.6 Q3.6 2.4 0.8 3.6" fill="none" stroke="#000" stroke-width="1.1"/></svg>
<div class="c" style="left:963px;top:393px;width:62px;height:21px;justify-content:flex-end;align-items:center;padding:0 2px;font:12px 'Liberation Sans', sans-serif;color:#000;-webkit-text-stroke:0.2px #000"><span style="transform:translateY(0px) scaleX(0.87);transform-origin:100% 0">30,000</span></div>
<div class="c" style="left:1026px;top:393px;width:71px;height:21px;justify-content:flex-end;align-items:center;padding:0 2px;font:12px 'Liberation Sans', sans-serif;color:#000;-webkit-text-stroke:0.2px #000"><span style="transform:translateY(0px) scaleX(0.87);transform-origin:100% 0">30,000</span></div>
<div class="c" style="left:1170px;top:393px;width:71px;height:21px;justify-content:flex-end;align-items:center;padding:0 2px;font:12px 'Liberation Sans', sans-serif;color:#000;-webkit-text-stroke:0.2px #000"><span style="transform:translateY(0px) scaleX(0.87);transform-origin:100% 0">30,000</span></div>
<svg style="left:1273px;top:398.5px" width="6" height="10" viewBox="0 0 6 10"><path d="M4.3 0 V9.6 M4.3 0.6 Q3.6 2.4 0.8 3.6" fill="none" stroke="#000" stroke-width="1.1"/></svg>
<div class="c" style="left:1282px;top:393px;width:48px;height:21px;overflow:hidden;font:12px 'Liberation Sans', sans-serif;color:#000;-webkit-text-stroke:0.2px #000"><div class="c" style="position:absolute;left:0;top:0;width:60px;height:21px;justify-content:flex-end;align-items:center;padding-right:2px"><span style="transform:scaleX(0.87);transform-origin:100% 0"><svg width="6.67" height="8.6" viewBox="0 0 6.67 8.6" style="vertical-align:baseline;display:inline-block"><path d="M4.2 0 V8.6 M4.2 0.6 Q3.5 2.2 1 3.2" fill="none" stroke="#000" stroke-width="1.1"/></svg>25,000</span></div></div>
<svg style="left:20px;top:415px" width="5" height="5" viewBox="0 0 5 5"><path d="M0 0 H5.2 L0 5.2 Z" fill="#008000"/></svg>
<div class="c" style="left:20px;top:415px;width:35px;height:21px;justify-content:center;align-items:center;padding:0 0px;font:17px 'Liberation Serif', serif;color:#000"><span style="transform:translateY(0.3px) scaleX(0.86);transform-origin:50% 0">4</span></div>
<div class="c" style="left:56px;top:415px;width:125px;height:21px;justify-content:flex-start;align-items:center;padding:0 2px;font:14px 'Liberation Serif', serif;color:#000;line-height:16.8px;overflow:hidden"><span style="transform:translateY(1px) scaleX(0.965);transform-origin:0 0">Trần Minh Anh</span></div>
<div class="c" style="left:182px;top:415px;width:66px;height:21px;justify-content:center;align-items:center;padding:0 0px;font:14px 'Liberation Serif', serif;color:#000"><span style="transform:translateY(1px) scaleX(0.87);transform-origin:50% 0">11/03/2018</span></div>
<div class="c" style="left:249px;top:415px;width:62px;height:21px;justify-content:flex-start;align-items:center;padding:0 2px;font:14px 'Liberation Serif', serif;color:#000"><span style="transform:translateY(1px) scaleX(0.95);transform-origin:0 0">D 1</span></div>
<svg style="left:954px;top:420.5px" width="6" height="10" viewBox="0 0 6 10"><path d="M4.3 0 V9.6 M4.3 0.6 Q3.6 2.4 0.8 3.6" fill="none" stroke="#000" stroke-width="1.1"/></svg>
<div class="c" style="left:963px;top:415px;width:62px;height:21px;justify-content:flex-end;align-items:center;padding:0 2px;font:12px 'Liberation Sans', sans-serif;color:#000;-webkit-text-stroke:0.2px #000"><span style="transform:translateY(0px) scaleX(0.87);transform-origin:100% 0">30,000</span></div>
<div class="c" style="left:1026px;top:415px;width:71px;height:21px;justify-content:flex-end;align-items:center;padding:0 2px;font:12px 'Liberation Sans', sans-serif;color:#000;-webkit-text-stroke:0.2px #000"><span style="transform:translateY(0px) scaleX(0.87);transform-origin:100% 0">30,000</span></div>
<div class="c" style="left:1170px;top:415px;width:71px;height:21px;justify-content:flex-end;align-items:center;padding:0 2px;font:12px 'Liberation Sans', sans-serif;color:#000;-webkit-text-stroke:0.2px #000"><span style="transform:translateY(0px) scaleX(0.87);transform-origin:100% 0">30,000</span></div>
<svg style="left:1273px;top:420.5px" width="6" height="10" viewBox="0 0 6 10"><path d="M4.3 0 V9.6 M4.3 0.6 Q3.6 2.4 0.8 3.6" fill="none" stroke="#000" stroke-width="1.1"/></svg>
<div class="c" style="left:1282px;top:415px;width:48px;height:21px;overflow:hidden;font:12px 'Liberation Sans', sans-serif;color:#000;-webkit-text-stroke:0.2px #000"><div class="c" style="position:absolute;left:0;top:0;width:60px;height:21px;justify-content:flex-end;align-items:center;padding-right:2px"><span style="transform:scaleX(0.87);transform-origin:100% 0"><svg width="6.67" height="8.6" viewBox="0 0 6.67 8.6" style="vertical-align:baseline;display:inline-block"><path d="M4.2 0 V8.6 M4.2 0.6 Q3.5 2.2 1 3.2" fill="none" stroke="#000" stroke-width="1.1"/></svg>25,000</span></div></div>
<svg style="left:20px;top:437px" width="5" height="5" viewBox="0 0 5 5"><path d="M0 0 H5.2 L0 5.2 Z" fill="#008000"/></svg>
<div class="c" style="left:20px;top:437px;width:35px;height:33px;justify-content:center;align-items:center;padding:0 0px;font:17px 'Liberation Serif', serif;color:#000"><span style="transform:translateY(0.3px) scaleX(0.86);transform-origin:50% 0">5</span></div>
<div class="c" style="left:56px;top:437px;width:125px;height:33px;justify-content:flex-start;align-items:center;padding:0 2px;font:14px 'Liberation Serif', serif;color:#000;line-height:16.8px;overflow:hidden"><span style="transform:translateY(1px) scaleX(0.965);transform-origin:0 0">Nguyễn Nhật Anh</span></div>
<div class="c" style="left:249px;top:437px;width:62px;height:33px;justify-content:flex-start;align-items:center;padding:0 2px;font:14px 'Liberation Serif', serif;color:#000"><span style="transform:translateY(1px) scaleX(0.95);transform-origin:0 0">D 1</span></div>
<svg style="left:954px;top:448.5px" width="6" height="10" viewBox="0 0 6 10"><path d="M4.3 0 V9.6 M4.3 0.6 Q3.6 2.4 0.8 3.6" fill="none" stroke="#000" stroke-width="1.1"/></svg>
<div class="c" style="left:963px;top:437px;width:62px;height:33px;justify-content:flex-end;align-items:center;padding:0 2px;font:12px 'Liberation Sans', sans-serif;color:#000;-webkit-text-stroke:0.2px #000"><span style="transform:translateY(0px) scaleX(0.87);transform-origin:100% 0">30,000</span></div>
<div class="c" style="left:1026px;top:437px;width:71px;height:33px;justify-content:flex-end;align-items:center;padding:0 2px;font:12px 'Liberation Sans', sans-serif;color:#000;-webkit-text-stroke:0.2px #000"><span style="transform:translateY(0px) scaleX(0.87);transform-origin:100% 0">30,000</span></div>
<div class="c" style="left:1170px;top:437px;width:71px;height:33px;justify-content:flex-end;align-items:center;padding:0 2px;font:12px 'Liberation Sans', sans-serif;color:#000;-webkit-text-stroke:0.2px #000"><span style="transform:translateY(0px) scaleX(0.87);transform-origin:100% 0">30,000</span></div>
<svg style="left:1273px;top:448.5px" width="6" height="10" viewBox="0 0 6 10"><path d="M4.3 0 V9.6 M4.3 0.6 Q3.6 2.4 0.8 3.6" fill="none" stroke="#000" stroke-width="1.1"/></svg>
<div class="c" style="left:1282px;top:437px;width:48px;height:33px;overflow:hidden;font:12px 'Liberation Sans', sans-serif;color:#000;-webkit-text-stroke:0.2px #000"><div class="c" style="position:absolute;left:0;top:0;width:60px;height:33px;justify-content:flex-end;align-items:center;padding-right:2px"><span style="transform:scaleX(0.87);transform-origin:100% 0"><svg width="6.67" height="8.6" viewBox="0 0 6.67 8.6" style="vertical-align:baseline;display:inline-block"><path d="M4.2 0 V8.6 M4.2 0.6 Q3.5 2.2 1 3.2" fill="none" stroke="#000" stroke-width="1.1"/></svg>25,000</span></div></div>
<svg style="left:20px;top:471px" width="5" height="5" viewBox="0 0 5 5"><path d="M0 0 H5.2 L0 5.2 Z" fill="#008000"/></svg>
<div class="c" style="left:20px;top:471px;width:35px;height:21px;justify-content:center;align-items:center;padding:0 0px;font:17px 'Liberation Serif', serif;color:#000"><span style="transform:translateY(0.3px) scaleX(0.86);transform-origin:50% 0">6</span></div>
<div class="c" style="left:56px;top:471px;width:125px;height:21px;justify-content:flex-start;align-items:center;padding:0 2px;font:14px 'Liberation Serif', serif;color:#000;line-height:16.8px;overflow:hidden"><span style="transform:translateY(1px) scaleX(0.965);transform-origin:0 0">Nguyễn Tuấn Duy<br>Anh</span></div>
<div class="c" style="left:249px;top:471px;width:62px;height:21px;justify-content:flex-start;align-items:center;padding:0 2px;font:14px 'Liberation Serif', serif;color:#000"><span style="transform:translateY(1px) scaleX(0.95);transform-origin:0 0">D 1</span></div>
<svg style="left:954px;top:476.5px" width="6" height="10" viewBox="0 0 6 10"><path d="M4.3 0 V9.6 M4.3 0.6 Q3.6 2.4 0.8 3.6" fill="none" stroke="#000" stroke-width="1.1"/></svg>
<div class="c" style="left:963px;top:471px;width:62px;height:21px;justify-content:flex-end;align-items:center;padding:0 2px;font:12px 'Liberation Sans', sans-serif;color:#000;-webkit-text-stroke:0.2px #000"><span style="transform:translateY(0px) scaleX(0.87);transform-origin:100% 0">30,000</span></div>
<div class="c" style="left:1026px;top:471px;width:71px;height:21px;justify-content:flex-end;align-items:center;padding:0 2px;font:12px 'Liberation Sans', sans-serif;color:#000;-webkit-text-stroke:0.2px #000"><span style="transform:translateY(0px) scaleX(0.87);transform-origin:100% 0">30,000</span></div>
<div class="c" style="left:1170px;top:471px;width:71px;height:21px;justify-content:flex-end;align-items:center;padding:0 2px;font:12px 'Liberation Sans', sans-serif;color:#000;-webkit-text-stroke:0.2px #000"><span style="transform:translateY(0px) scaleX(0.87);transform-origin:100% 0">30,000</span></div>
<svg style="left:1273px;top:476.5px" width="6" height="10" viewBox="0 0 6 10"><path d="M4.3 0 V9.6 M4.3 0.6 Q3.6 2.4 0.8 3.6" fill="none" stroke="#000" stroke-width="1.1"/></svg>
<div class="c" style="left:1282px;top:471px;width:48px;height:21px;overflow:hidden;font:12px 'Liberation Sans', sans-serif;color:#000;-webkit-text-stroke:0.2px #000"><div class="c" style="position:absolute;left:0;top:0;width:60px;height:21px;justify-content:flex-end;align-items:center;padding-right:2px"><span style="transform:scaleX(0.87);transform-origin:100% 0"><svg width="6.67" height="8.6" viewBox="0 0 6.67 8.6" style="vertical-align:baseline;display:inline-block"><path d="M4.2 0 V8.6 M4.2 0.6 Q3.5 2.2 1 3.2" fill="none" stroke="#000" stroke-width="1.1"/></svg>25,000</span></div></div>
<svg style="left:20px;top:493px" width="5" height="5" viewBox="0 0 5 5"><path d="M0 0 H5.2 L0 5.2 Z" fill="#008000"/></svg>
<div class="c" style="left:20px;top:493px;width:35px;height:21px;justify-content:center;align-items:center;padding:0 0px;font:17px 'Liberation Serif', serif;color:#000"><span style="transform:translateY(0.3px) scaleX(0.86);transform-origin:50% 0">7</span></div>
<div class="c" style="left:56px;top:493px;width:125px;height:21px;justify-content:flex-start;align-items:center;padding:0 2px;font:14px 'Liberation Serif', serif;color:#000;line-height:16.8px;overflow:hidden"><span style="transform:translateY(1px) scaleX(0.965);transform-origin:0 0">Nguyễn Hoàng Bách</span></div>
<div class="c" style="left:249px;top:493px;width:62px;height:21px;justify-content:flex-start;align-items:center;padding:0 2px;font:14px 'Liberation Serif', serif;color:#000"><span style="transform:translateY(1px) scaleX(0.95);transform-origin:0 0">D 1</span></div>
<svg style="left:954px;top:498.5px" width="6" height="10" viewBox="0 0 6 10"><path d="M4.3 0 V9.6 M4.3 0.6 Q3.6 2.4 0.8 3.6" fill="none" stroke="#000" stroke-width="1.1"/></svg>
<div class="c" style="left:963px;top:493px;width:62px;height:21px;justify-content:flex-end;align-items:center;padding:0 2px;font:12px 'Liberation Sans', sans-serif;color:#000;-webkit-text-stroke:0.2px #000"><span style="transform:translateY(0px) scaleX(0.87);transform-origin:100% 0">30,000</span></div>
<div class="c" style="left:1026px;top:493px;width:71px;height:21px;justify-content:flex-end;align-items:center;padding:0 2px;font:12px 'Liberation Sans', sans-serif;color:#000;-webkit-text-stroke:0.2px #000"><span style="transform:translateY(0px) scaleX(0.87);transform-origin:100% 0">30,000</span></div>
<div class="c" style="left:1170px;top:493px;width:71px;height:21px;justify-content:flex-end;align-items:center;padding:0 2px;font:12px 'Liberation Sans', sans-serif;color:#000;-webkit-text-stroke:0.2px #000"><span style="transform:translateY(0px) scaleX(0.87);transform-origin:100% 0">30,000</span></div>
<svg style="left:1273px;top:498.5px" width="6" height="10" viewBox="0 0 6 10"><path d="M4.3 0 V9.6 M4.3 0.6 Q3.6 2.4 0.8 3.6" fill="none" stroke="#000" stroke-width="1.1"/></svg>
<div class="c" style="left:1282px;top:493px;width:48px;height:21px;overflow:hidden;font:12px 'Liberation Sans', sans-serif;color:#000;-webkit-text-stroke:0.2px #000"><div class="c" style="position:absolute;left:0;top:0;width:60px;height:21px;justify-content:flex-end;align-items:center;padding-right:2px"><span style="transform:scaleX(0.87);transform-origin:100% 0"><svg width="6.67" height="8.6" viewBox="0 0 6.67 8.6" style="vertical-align:baseline;display:inline-block"><path d="M4.2 0 V8.6 M4.2 0.6 Q3.5 2.2 1 3.2" fill="none" stroke="#000" stroke-width="1.1"/></svg>25,000</span></div></div>
<svg style="left:20px;top:515px" width="5" height="5" viewBox="0 0 5 5"><path d="M0 0 H5.2 L0 5.2 Z" fill="#008000"/></svg>
<div class="c" style="left:20px;top:515px;width:35px;height:21px;justify-content:center;align-items:center;padding:0 0px;font:17px 'Liberation Serif', serif;color:#000"><span style="transform:translateY(0.3px) scaleX(0.86);transform-origin:50% 0">8</span></div>
<div class="c" style="left:56px;top:515px;width:125px;height:21px;justify-content:flex-start;align-items:center;padding:0 2px;font:14px 'Liberation Serif', serif;color:#000;line-height:16.8px;overflow:hidden"><span style="transform:translateY(1px) scaleX(0.965);transform-origin:0 0">Nguyễn Ngọc Linh<br>Chi</span></div>
<div class="c" style="left:249px;top:515px;width:62px;height:21px;justify-content:flex-start;align-items:center;padding:0 2px;font:14px 'Liberation Serif', serif;color:#000"><span style="transform:translateY(1px) scaleX(0.95);transform-origin:0 0">D 1</span></div>
<svg style="left:954px;top:520.5px" width="6" height="10" viewBox="0 0 6 10"><path d="M4.3 0 V9.6 M4.3 0.6 Q3.6 2.4 0.8 3.6" fill="none" stroke="#000" stroke-width="1.1"/></svg>
<div class="c" style="left:963px;top:515px;width:62px;height:21px;justify-content:flex-end;align-items:center;padding:0 2px;font:12px 'Liberation Sans', sans-serif;color:#000;-webkit-text-stroke:0.2px #000"><span style="transform:translateY(0px) scaleX(0.87);transform-origin:100% 0">30,000</span></div>
<div class="c" style="left:1026px;top:515px;width:71px;height:21px;justify-content:flex-end;align-items:center;padding:0 2px;font:12px 'Liberation Sans', sans-serif;color:#000;-webkit-text-stroke:0.2px #000"><span style="transform:translateY(0px) scaleX(0.87);transform-origin:100% 0">30,000</span></div>
<div class="c" style="left:1170px;top:515px;width:71px;height:21px;justify-content:flex-end;align-items:center;padding:0 2px;font:12px 'Liberation Sans', sans-serif;color:#000;-webkit-text-stroke:0.2px #000"><span style="transform:translateY(0px) scaleX(0.87);transform-origin:100% 0">30,000</span></div>
<svg style="left:1273px;top:520.5px" width="6" height="10" viewBox="0 0 6 10"><path d="M4.3 0 V9.6 M4.3 0.6 Q3.6 2.4 0.8 3.6" fill="none" stroke="#000" stroke-width="1.1"/></svg>
<div class="c" style="left:1282px;top:515px;width:48px;height:21px;overflow:hidden;font:12px 'Liberation Sans', sans-serif;color:#000;-webkit-text-stroke:0.2px #000"><div class="c" style="position:absolute;left:0;top:0;width:60px;height:21px;justify-content:flex-end;align-items:center;padding-right:2px"><span style="transform:scaleX(0.87);transform-origin:100% 0"><svg width="6.67" height="8.6" viewBox="0 0 6.67 8.6" style="vertical-align:baseline;display:inline-block"><path d="M4.2 0 V8.6 M4.2 0.6 Q3.5 2.2 1 3.2" fill="none" stroke="#000" stroke-width="1.1"/></svg>25,000</span></div></div>
<svg style="left:20px;top:537px" width="5" height="5" viewBox="0 0 5 5"><path d="M0 0 H5.2 L0 5.2 Z" fill="#008000"/></svg>
<div class="c" style="left:20px;top:537px;width:35px;height:21px;justify-content:center;align-items:center;padding:0 0px;font:17px 'Liberation Serif', serif;color:#000"><span style="transform:translateY(0.3px) scaleX(0.86);transform-origin:50% 0">9</span></div>
<div class="c" style="left:56px;top:537px;width:125px;height:21px;justify-content:flex-start;align-items:center;padding:0 2px;font:14px 'Liberation Serif', serif;color:#000;line-height:16.8px;overflow:hidden"><span style="transform:translateY(1px) scaleX(0.965);transform-origin:0 0">Nguyễn Ngọc Trí Đức</span></div>
<div class="c" style="left:249px;top:537px;width:62px;height:21px;justify-content:flex-start;align-items:center;padding:0 2px;font:14px 'Liberation Serif', serif;color:#000"><span style="transform:translateY(1px) scaleX(0.95);transform-origin:0 0">D 1</span></div>
<svg style="left:954px;top:542.5px" width="6" height="10" viewBox="0 0 6 10"><path d="M4.3 0 V9.6 M4.3 0.6 Q3.6 2.4 0.8 3.6" fill="none" stroke="#000" stroke-width="1.1"/></svg>
<div class="c" style="left:963px;top:537px;width:62px;height:21px;justify-content:flex-end;align-items:center;padding:0 2px;font:12px 'Liberation Sans', sans-serif;color:#000;-webkit-text-stroke:0.2px #000"><span style="transform:translateY(0px) scaleX(0.87);transform-origin:100% 0">30,000</span></div>
<div class="c" style="left:1026px;top:537px;width:71px;height:21px;justify-content:flex-end;align-items:center;padding:0 2px;font:12px 'Liberation Sans', sans-serif;color:#000;-webkit-text-stroke:0.2px #000"><span style="transform:translateY(0px) scaleX(0.87);transform-origin:100% 0">30,000</span></div>
<div class="c" style="left:1170px;top:537px;width:71px;height:21px;justify-content:flex-end;align-items:center;padding:0 2px;font:12px 'Liberation Sans', sans-serif;color:#000;-webkit-text-stroke:0.2px #000"><span style="transform:translateY(0px) scaleX(0.87);transform-origin:100% 0">30,000</span></div>
<svg style="left:1273px;top:542.5px" width="6" height="10" viewBox="0 0 6 10"><path d="M4.3 0 V9.6 M4.3 0.6 Q3.6 2.4 0.8 3.6" fill="none" stroke="#000" stroke-width="1.1"/></svg>
<div class="c" style="left:1282px;top:537px;width:48px;height:21px;overflow:hidden;font:12px 'Liberation Sans', sans-serif;color:#000;-webkit-text-stroke:0.2px #000"><div class="c" style="position:absolute;left:0;top:0;width:60px;height:21px;justify-content:flex-end;align-items:center;padding-right:2px"><span style="transform:scaleX(0.87);transform-origin:100% 0"><svg width="6.67" height="8.6" viewBox="0 0 6.67 8.6" style="vertical-align:baseline;display:inline-block"><path d="M4.2 0 V8.6 M4.2 0.6 Q3.5 2.2 1 3.2" fill="none" stroke="#000" stroke-width="1.1"/></svg>25,000</span></div></div>
<svg style="left:20px;top:559px" width="5" height="5" viewBox="0 0 5 5"><path d="M0 0 H5.2 L0 5.2 Z" fill="#008000"/></svg>
<div class="c" style="left:20px;top:559px;width:35px;height:21px;justify-content:center;align-items:center;padding:0 0px;font:17px 'Liberation Serif', serif;color:#000"><span style="transform:translateY(0.3px) scaleX(0.86);transform-origin:50% 0">10</span></div>
<div class="c" style="left:56px;top:559px;width:125px;height:21px;justify-content:flex-start;align-items:center;padding:0 2px;font:14px 'Liberation Serif', serif;color:#000;line-height:16.8px;overflow:hidden"><span style="transform:translateY(1px) scaleX(0.965);transform-origin:0 0">Phạm Gia Hân</span></div>
<div class="c" style="left:249px;top:559px;width:62px;height:21px;justify-content:flex-start;align-items:center;padding:0 2px;font:14px 'Liberation Serif', serif;color:#000"><span style="transform:translateY(1px) scaleX(0.95);transform-origin:0 0">D 1</span></div>
<svg style="left:954px;top:564.5px" width="6" height="10" viewBox="0 0 6 10"><path d="M4.3 0 V9.6 M4.3 0.6 Q3.6 2.4 0.8 3.6" fill="none" stroke="#000" stroke-width="1.1"/></svg>
<div class="c" style="left:963px;top:559px;width:62px;height:21px;justify-content:flex-end;align-items:center;padding:0 2px;font:12px 'Liberation Sans', sans-serif;color:#000;-webkit-text-stroke:0.2px #000"><span style="transform:translateY(0px) scaleX(0.87);transform-origin:100% 0">30,000</span></div>
<div class="c" style="left:1026px;top:559px;width:71px;height:21px;justify-content:flex-end;align-items:center;padding:0 2px;font:12px 'Liberation Sans', sans-serif;color:#000;-webkit-text-stroke:0.2px #000"><span style="transform:translateY(0px) scaleX(0.87);transform-origin:100% 0">30,000</span></div>
<div class="c" style="left:1170px;top:559px;width:71px;height:21px;justify-content:flex-end;align-items:center;padding:0 2px;font:12px 'Liberation Sans', sans-serif;color:#000;-webkit-text-stroke:0.2px #000"><span style="transform:translateY(0px) scaleX(0.87);transform-origin:100% 0">30,000</span></div>
<svg style="left:1273px;top:564.5px" width="6" height="10" viewBox="0 0 6 10"><path d="M4.3 0 V9.6 M4.3 0.6 Q3.6 2.4 0.8 3.6" fill="none" stroke="#000" stroke-width="1.1"/></svg>
<div class="c" style="left:1282px;top:559px;width:48px;height:21px;overflow:hidden;font:12px 'Liberation Sans', sans-serif;color:#000;-webkit-text-stroke:0.2px #000"><div class="c" style="position:absolute;left:0;top:0;width:60px;height:21px;justify-content:flex-end;align-items:center;padding-right:2px"><span style="transform:scaleX(0.87);transform-origin:100% 0"><svg width="6.67" height="8.6" viewBox="0 0 6.67 8.6" style="vertical-align:baseline;display:inline-block"><path d="M4.2 0 V8.6 M4.2 0.6 Q3.5 2.2 1 3.2" fill="none" stroke="#000" stroke-width="1.1"/></svg>25,000</span></div></div>
<svg style="left:20px;top:581px" width="5" height="5" viewBox="0 0 5 5"><path d="M0 0 H5.2 L0 5.2 Z" fill="#008000"/></svg>
<div class="c" style="left:20px;top:581px;width:35px;height:21px;justify-content:center;align-items:center;padding:0 0px;font:17px 'Liberation Serif', serif;color:#000"><span style="transform:translateY(0.3px) scaleX(0.86);transform-origin:50% 0">11</span></div>
<div class="c" style="left:56px;top:581px;width:125px;height:21px;justify-content:flex-start;align-items:center;padding:0 2px;font:14px 'Liberation Serif', serif;color:#000;line-height:16.8px;overflow:hidden"><span style="transform:translateY(1px) scaleX(0.965);transform-origin:0 0">Nguyễn Hoàng</span></div>
<div class="c" style="left:249px;top:581px;width:62px;height:21px;justify-content:flex-start;align-items:center;padding:0 2px;font:14px 'Liberation Serif', serif;color:#000"><span style="transform:translateY(1px) scaleX(0.95);transform-origin:0 0">D 1</span></div>
<svg style="left:954px;top:586.5px" width="6" height="10" viewBox="0 0 6 10"><path d="M4.3 0 V9.6 M4.3 0.6 Q3.6 2.4 0.8 3.6" fill="none" stroke="#000" stroke-width="1.1"/></svg>
<div class="c" style="left:963px;top:581px;width:62px;height:21px;justify-content:flex-end;align-items:center;padding:0 2px;font:12px 'Liberation Sans', sans-serif;color:#000;-webkit-text-stroke:0.2px #000"><span style="transform:translateY(0px) scaleX(0.87);transform-origin:100% 0">30,000</span></div>
<div class="c" style="left:1026px;top:581px;width:71px;height:21px;justify-content:flex-end;align-items:center;padding:0 2px;font:12px 'Liberation Sans', sans-serif;color:#000;-webkit-text-stroke:0.2px #000"><span style="transform:translateY(0px) scaleX(0.87);transform-origin:100% 0">30,000</span></div>
<div class="c" style="left:1170px;top:581px;width:71px;height:21px;justify-content:flex-end;align-items:center;padding:0 2px;font:12px 'Liberation Sans', sans-serif;color:#000;-webkit-text-stroke:0.2px #000"><span style="transform:translateY(0px) scaleX(0.87);transform-origin:100% 0">30,000</span></div>
<svg style="left:1273px;top:586.5px" width="6" height="10" viewBox="0 0 6 10"><path d="M4.3 0 V9.6 M4.3 0.6 Q3.6 2.4 0.8 3.6" fill="none" stroke="#000" stroke-width="1.1"/></svg>
<div class="c" style="left:1282px;top:581px;width:48px;height:21px;overflow:hidden;font:12px 'Liberation Sans', sans-serif;color:#000;-webkit-text-stroke:0.2px #000"><div class="c" style="position:absolute;left:0;top:0;width:60px;height:21px;justify-content:flex-end;align-items:center;padding-right:2px"><span style="transform:scaleX(0.87);transform-origin:100% 0"><svg width="6.67" height="8.6" viewBox="0 0 6.67 8.6" style="vertical-align:baseline;display:inline-block"><path d="M4.2 0 V8.6 M4.2 0.6 Q3.5 2.2 1 3.2" fill="none" stroke="#000" stroke-width="1.1"/></svg>25,000</span></div></div>
<svg style="left:20px;top:603px" width="5" height="5" viewBox="0 0 5 5"><path d="M0 0 H5.2 L0 5.2 Z" fill="#008000"/></svg>
<div class="c" style="left:20px;top:603px;width:35px;height:21px;justify-content:center;align-items:center;padding:0 0px;font:17px 'Liberation Serif', serif;color:#000"><span style="transform:translateY(0.3px) scaleX(0.86);transform-origin:50% 0">12</span></div>
<div class="c" style="left:56px;top:603px;width:125px;height:21px;justify-content:flex-start;align-items:center;padding:0 2px;font:14px 'Liberation Serif', serif;color:#000;line-height:16.8px;overflow:hidden"><span style="transform:translateY(1px) scaleX(0.965);transform-origin:0 0">Phùng Khánh Vy</span></div>
<div class="c" style="left:249px;top:603px;width:62px;height:21px;justify-content:flex-start;align-items:center;padding:0 2px;font:14px 'Liberation Serif', serif;color:#000"><span style="transform:translateY(1px) scaleX(0.95);transform-origin:0 0">D 1</span></div>
<svg style="left:954px;top:608.5px" width="6" height="10" viewBox="0 0 6 10"><path d="M4.3 0 V9.6 M4.3 0.6 Q3.6 2.4 0.8 3.6" fill="none" stroke="#000" stroke-width="1.1"/></svg>
<div class="c" style="left:963px;top:603px;width:62px;height:21px;justify-content:flex-end;align-items:center;padding:0 2px;font:12px 'Liberation Sans', sans-serif;color:#000;-webkit-text-stroke:0.2px #000"><span style="transform:translateY(0px) scaleX(0.87);transform-origin:100% 0">30,000</span></div>
<div class="c" style="left:1026px;top:603px;width:71px;height:21px;justify-content:flex-end;align-items:center;padding:0 2px;font:12px 'Liberation Sans', sans-serif;color:#000;-webkit-text-stroke:0.2px #000"><span style="transform:translateY(0px) scaleX(0.87);transform-origin:100% 0">30,000</span></div>
<div class="c" style="left:1170px;top:603px;width:71px;height:21px;justify-content:flex-end;align-items:center;padding:0 2px;font:12px 'Liberation Sans', sans-serif;color:#000;-webkit-text-stroke:0.2px #000"><span style="transform:translateY(0px) scaleX(0.87);transform-origin:100% 0">30,000</span></div>
<svg style="left:1273px;top:608.5px" width="6" height="10" viewBox="0 0 6 10"><path d="M4.3 0 V9.6 M4.3 0.6 Q3.6 2.4 0.8 3.6" fill="none" stroke="#000" stroke-width="1.1"/></svg>
<div class="c" style="left:1282px;top:603px;width:48px;height:21px;overflow:hidden;font:12px 'Liberation Sans', sans-serif;color:#000;-webkit-text-stroke:0.2px #000"><div class="c" style="position:absolute;left:0;top:0;width:60px;height:21px;justify-content:flex-end;align-items:center;padding-right:2px"><span style="transform:scaleX(0.87);transform-origin:100% 0"><svg width="6.67" height="8.6" viewBox="0 0 6.67 8.6" style="vertical-align:baseline;display:inline-block"><path d="M4.2 0 V8.6 M4.2 0.6 Q3.5 2.2 1 3.2" fill="none" stroke="#000" stroke-width="1.1"/></svg>25,000</span></div></div>
<svg style="left:20px;top:625px" width="5" height="5" viewBox="0 0 5 5"><path d="M0 0 H5.2 L0 5.2 Z" fill="#008000"/></svg>
<div class="c" style="left:20px;top:625px;width:35px;height:21px;justify-content:center;align-items:center;padding:0 0px;font:17px 'Liberation Serif', serif;color:#000"><span style="transform:translateY(0.3px) scaleX(0.86);transform-origin:50% 0">13</span></div>
<div class="c" style="left:56px;top:625px;width:125px;height:21px;justify-content:flex-start;align-items:center;padding:0 2px;font:14px 'Liberation Serif', serif;color:#000;line-height:16.8px;overflow:hidden"><span style="transform:translateY(1px) scaleX(0.965);transform-origin:0 0">Bùi Văn Lâm</span></div>
<div class="c" style="left:249px;top:625px;width:62px;height:21px;justify-content:flex-start;align-items:center;padding:0 2px;font:14px 'Liberation Serif', serif;color:#000"><span style="transform:translateY(1px) scaleX(0.95);transform-origin:0 0">D 1</span></div>
<svg style="left:954px;top:630.5px" width="6" height="10" viewBox="0 0 6 10"><path d="M4.3 0 V9.6 M4.3 0.6 Q3.6 2.4 0.8 3.6" fill="none" stroke="#000" stroke-width="1.1"/></svg>
<div class="c" style="left:963px;top:625px;width:62px;height:21px;justify-content:flex-end;align-items:center;padding:0 2px;font:12px 'Liberation Sans', sans-serif;color:#000;-webkit-text-stroke:0.2px #000"><span style="transform:translateY(0px) scaleX(0.87);transform-origin:100% 0">30,000</span></div>
<div class="c" style="left:1026px;top:625px;width:71px;height:21px;justify-content:flex-end;align-items:center;padding:0 2px;font:12px 'Liberation Sans', sans-serif;color:#000;-webkit-text-stroke:0.2px #000"><span style="transform:translateY(0px) scaleX(0.87);transform-origin:100% 0">30,000</span></div>
<div class="c" style="left:1170px;top:625px;width:71px;height:21px;justify-content:flex-end;align-items:center;padding:0 2px;font:12px 'Liberation Sans', sans-serif;color:#000;-webkit-text-stroke:0.2px #000"><span style="transform:translateY(0px) scaleX(0.87);transform-origin:100% 0">30,000</span></div>
<svg style="left:1273px;top:630.5px" width="6" height="10" viewBox="0 0 6 10"><path d="M4.3 0 V9.6 M4.3 0.6 Q3.6 2.4 0.8 3.6" fill="none" stroke="#000" stroke-width="1.1"/></svg>
<div class="c" style="left:1282px;top:625px;width:48px;height:21px;overflow:hidden;font:12px 'Liberation Sans', sans-serif;color:#000;-webkit-text-stroke:0.2px #000"><div class="c" style="position:absolute;left:0;top:0;width:60px;height:21px;justify-content:flex-end;align-items:center;padding-right:2px"><span style="transform:scaleX(0.87);transform-origin:100% 0"><svg width="6.67" height="8.6" viewBox="0 0 6.67 8.6" style="vertical-align:baseline;display:inline-block"><path d="M4.2 0 V8.6 M4.2 0.6 Q3.5 2.2 1 3.2" fill="none" stroke="#000" stroke-width="1.1"/></svg>25,000</span></div></div>
<svg style="left:20px;top:647px" width="5" height="5" viewBox="0 0 5 5"><path d="M0 0 H5.2 L0 5.2 Z" fill="#008000"/></svg>
<div class="c" style="left:20px;top:647px;width:35px;height:21px;justify-content:center;align-items:center;padding:0 0px;font:17px 'Liberation Serif', serif;color:#000"><span style="transform:translateY(0.3px) scaleX(0.86);transform-origin:50% 0">14</span></div>
<div class="c" style="left:56px;top:647px;width:125px;height:21px;justify-content:flex-start;align-items:center;padding:0 2px;font:14px 'Liberation Serif', serif;color:#000;line-height:16.8px;overflow:hidden"><span style="transform:translateY(1px) scaleX(0.965);transform-origin:0 0">Nguyễn Anh Khoa</span></div>
<div class="c" style="left:249px;top:647px;width:62px;height:21px;justify-content:flex-start;align-items:center;padding:0 2px;font:14px 'Liberation Serif', serif;color:#000"><span style="transform:translateY(1px) scaleX(0.95);transform-origin:0 0">D 1</span></div>
<svg style="left:954px;top:652.5px" width="6" height="10" viewBox="0 0 6 10"><path d="M4.3 0 V9.6 M4.3 0.6 Q3.6 2.4 0.8 3.6" fill="none" stroke="#000" stroke-width="1.1"/></svg>
<div class="c" style="left:963px;top:647px;width:62px;height:21px;justify-content:flex-end;align-items:center;padding:0 2px;font:12px 'Liberation Sans', sans-serif;color:#000;-webkit-text-stroke:0.2px #000"><span style="transform:translateY(0px) scaleX(0.87);transform-origin:100% 0">30,000</span></div>
<div class="c" style="left:1026px;top:647px;width:71px;height:21px;justify-content:flex-end;align-items:center;padding:0 2px;font:12px 'Liberation Sans', sans-serif;color:#000;-webkit-text-stroke:0.2px #000"><span style="transform:translateY(0px) scaleX(0.87);transform-origin:100% 0">30,000</span></div>
<div class="c" style="left:1170px;top:647px;width:71px;height:21px;justify-content:flex-end;align-items:center;padding:0 2px;font:12px 'Liberation Sans', sans-serif;color:#000;-webkit-text-stroke:0.2px #000"><span style="transform:translateY(0px) scaleX(0.87);transform-origin:100% 0">30,000</span></div>
<svg style="left:1273px;top:652.5px" width="6" height="10" viewBox="0 0 6 10"><path d="M4.3 0 V9.6 M4.3 0.6 Q3.6 2.4 0.8 3.6" fill="none" stroke="#000" stroke-width="1.1"/></svg>
<div class="c" style="left:1282px;top:647px;width:48px;height:21px;overflow:hidden;font:12px 'Liberation Sans', sans-serif;color:#000;-webkit-text-stroke:0.2px #000"><div class="c" style="position:absolute;left:0;top:0;width:60px;height:21px;justify-content:flex-end;align-items:center;padding-right:2px"><span style="transform:scaleX(0.87);transform-origin:100% 0"><svg width="6.67" height="8.6" viewBox="0 0 6.67 8.6" style="vertical-align:baseline;display:inline-block"><path d="M4.2 0 V8.6 M4.2 0.6 Q3.5 2.2 1 3.2" fill="none" stroke="#000" stroke-width="1.1"/></svg>25,000</span></div></div>
<svg style="left:20px;top:669px" width="5" height="5" viewBox="0 0 5 5"><path d="M0 0 H5.2 L0 5.2 Z" fill="#008000"/></svg>
<div class="c" style="left:20px;top:669px;width:35px;height:21px;justify-content:center;align-items:center;padding:0 0px;font:17px 'Liberation Serif', serif;color:#000"><span style="transform:translateY(0.3px) scaleX(0.86);transform-origin:50% 0">15</span></div>
<div class="c" style="left:56px;top:669px;width:125px;height:21px;justify-content:flex-start;align-items:center;padding:0 2px;font:14px 'Liberation Serif', serif;color:#000;line-height:16.8px;overflow:hidden"><span style="transform:translateY(1px) scaleX(0.965);transform-origin:0 0">Đào Duy</span></div>
<div class="c" style="left:249px;top:669px;width:62px;height:21px;justify-content:flex-start;align-items:center;padding:0 2px;font:14px 'Liberation Serif', serif;color:#000"><span style="transform:translateY(1px) scaleX(0.95);transform-origin:0 0">D 1</span></div>
<svg style="left:954px;top:674.5px" width="6" height="10" viewBox="0 0 6 10"><path d="M4.3 0 V9.6 M4.3 0.6 Q3.6 2.4 0.8 3.6" fill="none" stroke="#000" stroke-width="1.1"/></svg>
<div class="c" style="left:963px;top:669px;width:62px;height:21px;justify-content:flex-end;align-items:center;padding:0 2px;font:12px 'Liberation Sans', sans-serif;color:#000;-webkit-text-stroke:0.2px #000"><span style="transform:translateY(0px) scaleX(0.87);transform-origin:100% 0">30,000</span></div>
<div class="c" style="left:1026px;top:669px;width:71px;height:21px;justify-content:flex-end;align-items:center;padding:0 2px;font:12px 'Liberation Sans', sans-serif;color:#000;-webkit-text-stroke:0.2px #000"><span style="transform:translateY(0px) scaleX(0.87);transform-origin:100% 0">30,000</span></div>
<div class="c" style="left:1170px;top:669px;width:71px;height:21px;justify-content:flex-end;align-items:center;padding:0 2px;font:12px 'Liberation Sans', sans-serif;color:#000;-webkit-text-stroke:0.2px #000"><span style="transform:translateY(0px) scaleX(0.87);transform-origin:100% 0">30,000</span></div>
<svg style="left:1273px;top:674.5px" width="6" height="10" viewBox="0 0 6 10"><path d="M4.3 0 V9.6 M4.3 0.6 Q3.6 2.4 0.8 3.6" fill="none" stroke="#000" stroke-width="1.1"/></svg>
<div class="c" style="left:1282px;top:669px;width:48px;height:21px;overflow:hidden;font:12px 'Liberation Sans', sans-serif;color:#000;-webkit-text-stroke:0.2px #000"><div class="c" style="position:absolute;left:0;top:0;width:60px;height:21px;justify-content:flex-end;align-items:center;padding-right:2px"><span style="transform:scaleX(0.87);transform-origin:100% 0"><svg width="6.67" height="8.6" viewBox="0 0 6.67 8.6" style="vertical-align:baseline;display:inline-block"><path d="M4.2 0 V8.6 M4.2 0.6 Q3.5 2.2 1 3.2" fill="none" stroke="#000" stroke-width="1.1"/></svg>25,000</span></div></div>
<svg style="left:20px;top:691px" width="5" height="5" viewBox="0 0 5 5"><path d="M0 0 H5.2 L0 5.2 Z" fill="#008000"/></svg>
<div class="c" style="left:20px;top:691px;width:35px;height:21px;justify-content:center;align-items:center;padding:0 0px;font:17px 'Liberation Serif', serif;color:#000"><span style="transform:translateY(0.3px) scaleX(0.86);transform-origin:50% 0">16</span></div>
<div class="c" style="left:56px;top:691px;width:125px;height:21px;justify-content:flex-start;align-items:center;padding:0 2px;font:14px 'Liberation Serif', serif;color:#000;line-height:16.8px;overflow:hidden"><span style="transform:translateY(1px) scaleX(0.965);transform-origin:0 0">Vũ Yến Nhi</span></div>
<div class="c" style="left:249px;top:691px;width:62px;height:21px;justify-content:flex-start;align-items:center;padding:0 2px;font:14px 'Liberation Serif', serif;color:#000"><span style="transform:translateY(1px) scaleX(0.95);transform-origin:0 0">D 1</span></div>
<svg style="left:954px;top:696.5px" width="6" height="10" viewBox="0 0 6 10"><path d="M4.3 0 V9.6 M4.3 0.6 Q3.6 2.4 0.8 3.6" fill="none" stroke="#000" stroke-width="1.1"/></svg>
<div class="c" style="left:963px;top:691px;width:62px;height:21px;justify-content:flex-end;align-items:center;padding:0 2px;font:12px 'Liberation Sans', sans-serif;color:#000;-webkit-text-stroke:0.2px #000"><span style="transform:translateY(0px) scaleX(0.87);transform-origin:100% 0">30,000</span></div>
<div class="c" style="left:1026px;top:691px;width:71px;height:21px;justify-content:flex-end;align-items:center;padding:0 2px;font:12px 'Liberation Sans', sans-serif;color:#000;-webkit-text-stroke:0.2px #000"><span style="transform:translateY(0px) scaleX(0.87);transform-origin:100% 0">30,000</span></div>
<div class="c" style="left:1170px;top:691px;width:71px;height:21px;justify-content:flex-end;align-items:center;padding:0 2px;font:12px 'Liberation Sans', sans-serif;color:#000;-webkit-text-stroke:0.2px #000"><span style="transform:translateY(0px) scaleX(0.87);transform-origin:100% 0">30,000</span></div>
<svg style="left:1273px;top:696.5px" width="6" height="10" viewBox="0 0 6 10"><path d="M4.3 0 V9.6 M4.3 0.6 Q3.6 2.4 0.8 3.6" fill="none" stroke="#000" stroke-width="1.1"/></svg>
<div class="c" style="left:1282px;top:691px;width:48px;height:21px;overflow:hidden;font:12px 'Liberation Sans', sans-serif;color:#000;-webkit-text-stroke:0.2px #000"><div class="c" style="position:absolute;left:0;top:0;width:60px;height:21px;justify-content:flex-end;align-items:center;padding-right:2px"><span style="transform:scaleX(0.87);transform-origin:100% 0"><svg width="6.67" height="8.6" viewBox="0 0 6.67 8.6" style="vertical-align:baseline;display:inline-block"><path d="M4.2 0 V8.6 M4.2 0.6 Q3.5 2.2 1 3.2" fill="none" stroke="#000" stroke-width="1.1"/></svg>25,000</span></div></div>
<div class="c" style="left:384px;top:321px;width:156px;height:49px;justify-content:flex-start;align-items:center;padding:0 2px;font:14px 'Liberation Serif', serif;color:#000;line-height:16.8px;overflow:hidden"><span style="transform:translateY(1.5px) scaleX(0.95);transform-origin:0 0">Phường Đông Xuân, Quận<br>Hoàn Kiếm, Thành phố Hà<br>Nội</span></div>
<div class="c" style="left:384px;top:437px;width:156px;height:33px;justify-content:flex-start;align-items:center;padding:0 2px;font:14px 'Liberation Serif', serif;color:#000;line-height:16.8px;overflow:hidden"><span style="transform:translateY(1.2px) scaleX(0.95);transform-origin:0 0">Xã Tân Thắng, Huyện<br>Quỳnh Lưu, Tỉnh Nghệ An</span></div>
<div class="c" style="left:541px;top:437px;width:62px;height:33px;justify-content:flex-start;align-items:center;padding:0 2px;font:14px 'Liberation Serif', serif;color:#000"><span style="transform:translateY(1px) scaleX(1);transform-origin:0 0">I</span></div>
<div style="left:380px;top:240px;width:226px;height:83px;border:3px solid #ff3b3b;box-sizing:border-box"></div>
<div style="left:18px;top:125px;width:1312px;height:2px;background:#1d6b3e"></div>
<div style="left:18px;top:155px;width:1312px;height:2px;background:#1d6b3e"></div>
<div style="left:18px;top:125px;width:2px;height:32px;background:#1d6b3e"></div>
<div style="left:1330px;top:110px;width:1px;height:603px;background:#ababab"></div>
<div style="left:1331px;top:110px;width:19px;height:603px;background:#e6e6e6"></div>
<div style="left:1334px;top:127px;width:15px;height:573px;background:#dadada"></div>
<div style="left:1334px;top:112px;width:15px;height:15px;background:#fff;border:1px solid #c6c6c6;box-sizing:border-box"></div>
<svg style="left:1337px;top:117px" width="9" height="5" viewBox="0 0 9 5"><path d="M0 5 H9 L4.5 0 Z" fill="#777"/></svg>
<div style="left:1334px;top:128px;width:15px;height:16px;background:#fff;border:1px solid #c6c6c6;box-sizing:border-box"></div>
<div style="left:1334px;top:699px;width:15px;height:15px;background:#fff;border:1px solid #c6c6c6;box-sizing:border-box"></div>
<svg style="left:1337px;top:705px" width="9" height="5" viewBox="0 0 9 5"><path d="M0 0 H9 L4.5 5 Z" fill="#777"/></svg>
<div style="left:1px;top:713px;width:1349px;height:28px;background:#e6e6e6"></div>
<svg style="left:21px;top:722px" width="5" height="9" viewBox="0 0 5 9"><path d="M5 0 V9 L0 4.5 Z" fill="#c2c2c2"/></svg>
<svg style="left:49px;top:722px" width="5" height="9" viewBox="0 0 5 9"><path d="M0 0 V9 L5 4.5 Z" fill="#c2c2c2"/></svg>
<div style="left:94px;top:713px;width:65px;height:25px;background:#fff;border-left:1px solid #c6c6c6;border-right:1px solid #c6c6c6;box-sizing:border-box"></div>
<div style="left:94px;top:736px;width:65px;height:2px;background:#217346"></div>
<div style="left:94px;top:719px;font:bold 13px 'Liberation Sans', sans-serif;color:#217346;white-space:nowrap;width:65px;text-align:center">Page 1</div>
<svg style="left:191px;top:718px" width="18" height="18" viewBox="0 0 18 18">
<circle cx="9" cy="9" r="7.6" fill="none" stroke="#777" stroke-width="1.2"/>
<path d="M9 4.5 V13.5 M4.5 9 H13.5" stroke="#777" stroke-width="1.8"/>
</svg>
<div style="left:809px;top:722px;width:2px;height:2px;background:#a0a0a0"></div>
<div style="left:809px;top:726px;width:2px;height:2px;background:#a0a0a0"></div>
<div style="left:809px;top:730px;width:2px;height:2px;background:#a0a0a0"></div>
<div style="left:826px;top:720px;width:505px;height:15px;background:#dadada"></div>
<div style="left:826px;top:720px;width:15px;height:15px;background:#fff;border:1px solid #c6c6c6;box-sizing:border-box"></div>
<svg style="left:831px;top:723px" width="5" height="9" viewBox="0 0 5 9"><path d="M5 0 V9 L0 4.5 Z" fill="#777"/></svg>
<div style="left:841px;top:720px;width:18px;height:15px;background:#fff;border:1px solid #c6c6c6;box-sizing:border-box"></div>
<div style="left:1316px;top:720px;width:15px;height:15px;background:#fff;border:1px solid #c6c6c6;box-sizing:border-box"></div>
<svg style="left:1322px;top:723px" width="5" height="9" viewBox="0 0 5 9"><path d="M0 0 V9 L5 4.5 Z" fill="#777"/></svg>
<div style="left:1px;top:741px;width:1349px;height:1px;background:#c6c6c6"></div>
<div style="left:1px;top:742px;width:1349px;height:18px;background:#f0f0f0"></div>
<div style="left:2px;top:745px;font:normal 11px 'Liberation Sans', sans-serif;color:#444;white-space:nowrap;line-height:15px"><span style="display:inline-block;transform:scaleX(0.98);transform-origin:0 0">Ready</span></div>
<div style="left:1049px;top:742px;width:38px;height:18px;background:#d2d2d2"></div>
<svg style="left:1061px;top:745px" width="13" height="13" viewBox="0 0 13 13">
<path d="M0.5 0.5 H12.5 V12.5 H0.5 Z M4.5 0.5 V12.5 M8.5 0.5 V12.5 M0.5 4.5 H12.5 M0.5 8.5 H12.5" fill="none" stroke="#666" stroke-width="1"/>
</svg>
<svg style="left:1099px;top:745px" width="14" height="13" viewBox="0 0 14 13">
<path d="M0.5 0.5 H13.5 V12.5 H0.5 Z" fill="none" stroke="#666" stroke-width="1"/>
<path d="M3.5 2.5 H10.5 V10.5 H3.5 Z" fill="none" stroke="#666" stroke-width="1"/>
<path d="M5 4.5 H9 M5 6.5 H9 M5 8.5 H9" stroke="#666" stroke-width="1"/>
</svg>
<svg style="left:1137px;top:745px" width="14" height="13" viewBox="0 0 14 13">
<path d="M0.5 0.5 H13.5 V12.5 H0.5 Z" fill="none" stroke="#666" stroke-width="1"/>
<path d="M4.5 0.5 V7.5 M8.5 0.5 V7.5 H0.5" fill="none" stroke="#666" stroke-width="1"/>
</svg>
<div style="left:1169px;top:751px;width:8px;height:2px;background:#666"></div>
<div style="left:1178px;top:751px;width:100px;height:1px;background:#9a9a9a"></div>
<div style="left:1226px;top:746px;width:4px;height:11px;background:#666"></div>
<div style="left:1282px;top:751px;width:9px;height:2px;background:#666"></div>
<div style="left:1285px;top:747px;width:2px;height:9px;background:#666"></div>
<div style="left:1305px;top:745px;font:normal 12px 'Liberation Sans', sans-serif;color:#444;white-space:nowrap;line-height:15px"><span style="display:inline-block;transform:scaleX(0.88);transform-origin:0 0">100%</span></div>
<div style="left:0px;top:0px;width:1351px;height:1px;background:#1f1f1f"></div>
<div style="left:0px;top:0px;width:1px;height:761px;background:#1f1f1f"></div>
<div style="left:1350px;top:0px;width:1px;height:761px;background:#1f1f1f"></div>
<div style="left:0px;top:760px;width:1351px;height:1px;background:#1f1f1f"></div>
</div></body></html>
